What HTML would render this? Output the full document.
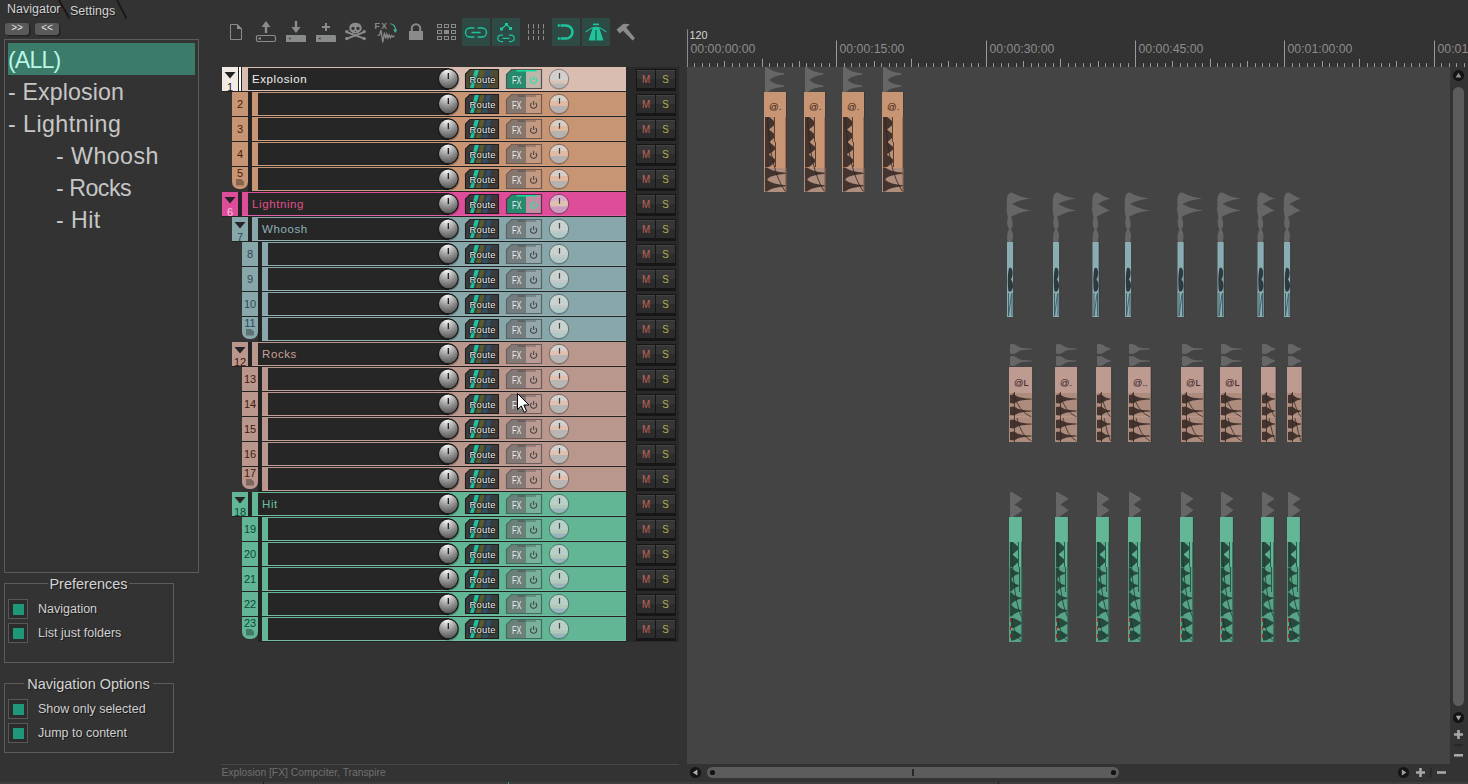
<!DOCTYPE html>
<html><head><meta charset="utf-8"><title>Navigator</title>
<style>
*{box-sizing:border-box;margin:0;padding:0}
html,body{width:1468px;height:784px;overflow:hidden;background:#333333}
body{position:relative;font-family:"Liberation Sans",sans-serif;color:#c8c8c8}
.a{position:absolute}
.t{position:absolute;white-space:nowrap;line-height:1}
.sh{text-shadow:1px 1px 0 #1c1c1c}
.li{position:absolute;left:8px;font-size:23.2px;letter-spacing:.45px;color:#c6c6c6;white-space:nowrap;line-height:32px;height:32px}
.grp{position:absolute;border:1px solid #5c5c5c}
.cb{position:absolute;width:20px;height:20px;border:1px solid #585858;background:#2c2c2c}
.cb i{position:absolute;left:4px;top:4px;width:11px;height:11px;background:#1e9878}
.lb{position:absolute;font-size:12.5px;color:#d0d0d0;white-space:nowrap;line-height:1;text-shadow:1px 1px 0 #1a1a1a}
.nb{position:absolute;width:16px;height:24px;font-size:11px;text-align:center;line-height:1}
.nb span{position:absolute;left:0;width:16px;text-align:center}
.row{position:absolute;height:24px}
.nm{position:absolute;top:1px;height:22px;background:#262626}
.nt{position:absolute;font-size:11.5px;letter-spacing:.6px;line-height:1;white-space:nowrap}
.ms{position:absolute;width:20px;height:20px;border:1px solid #161616;background:linear-gradient(#444 0,#444 1px,#363636 1px,#363636 50%,#2c2c2c 50%,#2c2c2c 100%);font-size:9.8px;text-align:center;line-height:18px;box-shadow:0 2px 0 #161616}
.ms i{display:block;font-style:normal;transform:scaleY(1.2)}
.rt{position:absolute;font-size:9.4px;letter-spacing:.25px;color:#f8f8f8;line-height:1;white-space:nowrap;text-shadow:0 0 1.5px #000,0 0 1.5px #000,0 0 2px #111}
.fx{position:absolute;font-size:9.7px;color:#ececec;line-height:1;white-space:nowrap;transform:scale(.76,1.03);transform-origin:0 0}
.rl{position:absolute;font-size:12.3px;color:#8c8c8c;line-height:1;white-space:nowrap}
</style></head><body>

<div class="t sh" style="left:7px;top:3px;font-size:12.5px;color:#d2d2d2">Navigator</div>
<div class="t sh" style="left:70px;top:5px;font-size:12.5px;color:#d2d2d2">Settings</div>
<svg class="a" style="left:0;top:0" width="140" height="22"><path d="M59 0 L69.5 18.5 M117 0 L126.5 18.5" stroke="#181818" stroke-width="1.8" fill="none"/></svg>
<div class="a" style="left:5px;top:23px;width:24px;height:11.5px;background:#5a5a5a;border-radius:3px;box-shadow:1.5px 1.5px 0 #222;font-size:10px;line-height:9px;text-align:center;color:#e4e4e4;letter-spacing:0">&gt;&gt;</div>
<div class="a" style="left:35px;top:23px;width:24px;height:11.5px;background:#5a5a5a;border-radius:3px;box-shadow:1.5px 1.5px 0 #222;font-size:10px;line-height:9px;text-align:center;color:#e4e4e4;letter-spacing:0">&lt;&lt;</div>
<div class="a" style="left:4px;top:39px;width:195px;height:534px;border:1px solid #5c5c5c"></div>
<div class="a" style="left:8px;top:43px;width:187px;height:32px;background:#3a7b69"></div>
<div class="li" style="left:8px;top:44px;color:#b8f6e6;letter-spacing:-.9px">(ALL)</div>
<div class="li" style="left:8px;top:76px;color:#c6c6c6;letter-spacing:.12px">- Explosion</div>
<div class="li" style="left:8px;top:108px">- Lightning</div>
<div class="li" style="left:56px;top:140px">- Whoosh</div>
<div class="li" style="left:56px;top:172px;color:#c6c6c6;letter-spacing:-.5px">- Rocks</div>
<div class="li" style="left:56px;top:204px">- Hit</div>
<div class="grp" style="left:4px;top:583px;width:170px;height:80px"></div>
<div class="t sh" style="left:48px;top:575px;width:81px;text-align:center;background:#333333;font-size:14.5px;color:#d4d4d4;height:18px;line-height:18px">Preferences</div>
<div class="cb" style="left:8px;top:599px"><i></i></div>
<div class="lb" style="left:38px;top:603px">Navigation</div>
<div class="cb" style="left:8px;top:623px"><i></i></div>
<div class="lb" style="left:38px;top:627px">List just folders</div>
<div class="grp" style="left:4px;top:683px;width:170px;height:70px"></div>
<div class="t sh" style="left:24px;top:675px;width:129px;text-align:center;background:#333333;font-size:14.5px;color:#d4d4d4;height:18px;line-height:18px">Navigation Options</div>
<div class="cb" style="left:8px;top:699px"><i></i></div>
<div class="lb" style="left:38px;top:703px">Show only selected</div>
<div class="cb" style="left:8px;top:723px"><i></i></div>
<div class="lb" style="left:38px;top:727px">Jump to content</div>
<svg class="a" style="left:220px;top:14px" width="430" height="40" viewBox="220 14 430 40">
<rect x="462" y="18" width="28" height="28" fill="#2d4a44"/>
<rect x="492" y="18" width="28" height="28" fill="#2d4a44"/>
<rect x="552" y="18" width="28" height="28" fill="#2d4a44"/>
<rect x="582" y="18" width="28" height="28" fill="#2d4a44"/>
<path d="M230.5 24.5 H237.5 L241.5 28.5 V39.5 H230.5 Z" fill="none" stroke="#8a8c8c" stroke-width="1"/><path d="M237 24 L242 29 H237 Z" fill="#8a8c8c"/>
<path d="M266 21 L270.5 27 H267.2 V33 H264.8 V27 H261.5 Z" fill="#8a8c8c"/>
<rect x="256.5" y="35.5" width="19" height="6" rx="1.5" fill="none" stroke="#8a8c8c" stroke-width="1.2"/><rect x="258.5" y="37.5" width="2.5" height="2" fill="#8a8c8c"/>
<path d="M296 33 L291.5 27 H294.8 V21 H297.2 V27 H300.5 Z" fill="#8a8c8c"/>
<path d="M286 35 H305 L306 36 V42 H286 Z" fill="#8a8c8c"/><path d="M288.5 38.5 L290.5 37.3 V39.7 Z" fill="#333"/>
<path d="M322 26 H325 V23 H327 V26 H330 V28 H327 V31 H325 V28 H322 Z" fill="#8a8c8c"/>
<path d="M316 35 H335 L336 36 V42 H316 Z" fill="#8a8c8c"/><path d="M318.5 38.5 L320.5 37.3 V39.7 Z" fill="#333"/>
<g fill="#8a8c8c"><path d="M355.5 22.8 C351 22.8 349.3 25.6 349.3 28.2 C349.3 30.3 350.6 31.5 352.2 32.3 V35 H358.8 V32.3 C360.4 31.5 361.7 30.3 361.7 28.2 C361.7 25.6 360 22.8 355.5 22.8 Z"/><path d="M346.5 31 L364.5 37.8 L363.8 39.6 L345.8 32.8 Z"/><path d="M364.5 31 L346.5 37.8 L347.2 39.6 L365.2 32.8 Z"/><circle cx="346.8" cy="31.6" r="1.7"/><circle cx="364.2" cy="31.6" r="1.7"/><circle cx="346.8" cy="38.6" r="1.7"/><circle cx="364.2" cy="38.6" r="1.7"/></g>
<circle cx="353" cy="28.4" r="1.6" fill="#333"/><circle cx="358" cy="28.4" r="1.6" fill="#333"/><path d="M354.8 32 L355.5 30.4 L356.2 32 Z" fill="#333"/><path d="M353 33.6 H358" stroke="#333" stroke-width=".7"/>
<text x="374.5" y="28.8" font-family="Liberation Sans, sans-serif" font-size="8.6" font-weight="bold" fill="#8a8c8c" letter-spacing="1.6">FX</text>
<path d="M377.5 35.5 L379.6 35 L381 30 L382.8 42.5 L384.4 32.5 L385.6 38.5 L386.8 34 L388 38 L389.2 35 L390.4 37.8 L391.6 35.5 L393 37 L394.5 35.8" fill="none" stroke="#8a8c8c" stroke-width="1.25"/>
<path d="M390.5 23.8 C394 24 395.5 27 395.3 30.5" fill="none" stroke="#3fb89a" stroke-width="1.1"/><path d="M393.2 29.5 L397.4 29.5 L395.3 33 Z" fill="#3fb89a"/>
<path d="M409 31 H423 V40 H409 Z" fill="#8a8c8c"/><path d="M411.8 31 V28.5 A4.2 4.2 0 0 1 420.2 28.5 V31" fill="none" stroke="#8a8c8c" stroke-width="2"/>
<rect x="437.5" y="24.5" width="4" height="3" fill="none" stroke="#8a8c8c" stroke-width="1"/>
<rect x="444.5" y="24.5" width="4" height="3" fill="none" stroke="#8a8c8c" stroke-width="1"/>
<rect x="451.5" y="24.5" width="4" height="3" fill="none" stroke="#8a8c8c" stroke-width="1"/>
<rect x="437.5" y="30.5" width="4" height="3" fill="none" stroke="#8a8c8c" stroke-width="1"/>
<rect x="444.0" y="30.0" width="5" height="4" fill="#8a8c8c"/>
<rect x="451.5" y="30.5" width="4" height="3" fill="none" stroke="#8a8c8c" stroke-width="1"/>
<rect x="437.5" y="36.5" width="4" height="3" fill="none" stroke="#8a8c8c" stroke-width="1"/>
<rect x="444.5" y="36.5" width="4" height="3" fill="none" stroke="#8a8c8c" stroke-width="1"/>
<rect x="451.5" y="36.5" width="4" height="3" fill="none" stroke="#8a8c8c" stroke-width="1"/>
<g fill="none" stroke="#1fc49c" stroke-width="1.3"><path d="M474.3 28 H470 A4.5 4.5 0 0 0 470 37 H474.3 M477.7 28 H482 A4.5 4.5 0 0 1 482 37 H477.7 M471.5 32.5 H480.5"/></g>
<g fill="none" stroke="#1fc49c" stroke-width="1.2"><path d="M503 35.2 H501 A3.2 3.2 0 0 0 501 41.6 H503 M509 35.2 H511 A3.2 3.2 0 0 1 511 41.6 H509 M502.5 38.4 H509.5"/><path d="M501.5 29 L506.5 24.5 L510.5 28.5"/></g>
<rect x="500" y="27.5" width="3" height="3" fill="#1fc49c"/><rect x="505" y="23" width="3" height="3" fill="#1fc49c"/><rect x="509" y="27" width="3" height="3" fill="#1fc49c"/>
<path d="M528.5 24 V28.5 M528.5 30 V34 M528.5 36 V40" stroke="#8a8c8c" stroke-width="1"/>
<path d="M533.5 24 V28.5 M533.5 30 V34 M533.5 36 V40" stroke="#8a8c8c" stroke-width="1"/>
<path d="M538.5 24 V28.5 M538.5 30 V34 M538.5 36 V40" stroke="#8a8c8c" stroke-width="1"/>
<path d="M543.5 24 V28.5 M543.5 30 V34 M543.5 36 V40" stroke="#8a8c8c" stroke-width="1"/>
<path d="M560.5 25.5 H566 A6.5 6.5 0 0 1 566 38.5 H560.5" fill="none" stroke="#1fc49c" stroke-width="2.6"/><rect x="557.8" y="24.2" width="2" height="2.6" fill="#1fc49c"/><rect x="557.8" y="37.2" width="2" height="2.6" fill="#1fc49c"/>
<path d="M593 27 H599 L603.5 40.5 H588.5 Z" fill="#1fc49c"/><path d="M596 30 V40.5" stroke="#2d4a44" stroke-width="1.2"/><path d="M593.3 23.5 H598.7 L599.2 25.3 H592.8 Z" fill="#1fc49c"/><path d="M586 32 Q596 22.5 606 32" fill="none" stroke="#1fc49c" stroke-width="1.1"/>
<path d="M616.5 29.5 L623.5 23.8 L630 24.2 L626.2 27.6 L635 38.2 L632.6 40.6 L623 30.8 L619.6 33.6 Z" fill="#8a8c8c"/>
</svg>
<div class="a" style="left:626px;top:67px;width:53px;height:575px;background:#292929"></div>
<div class="a" style="left:222px;top:67px;width:404px;height:25px;background:#232323"></div>
<div class="nb" style="left:222px;top:67px;background:#f3e9e5;"><span style="top:15px;color:#222">1</span></div>
<div class="a" style="left:239px;top:67px;width:2px;height:24px;background:#fff"></div>
<div class="row" style="left:242px;top:67px;width:384px;background:#d9bdb0;box-shadow:inset 0 -1px 0 #ddc4b8"><div class="nm" style="left:6px;width:201px"></div></div>
<div class="nt" style="left:252px;top:74px;color:#f0f0f0">Explosion</div>
<div class="ms" style="left:636px;top:69px;color:#c06558"><i>M</i></div><div class="ms" style="left:655px;width:21px;top:69px;color:#b4b050"><i>S</i></div>
<div class="a" style="left:232px;top:92px;width:394px;height:25px;background:#232323"></div>
<div class="nb" style="left:232px;top:92px;background:#c79474;"><span style="top:7px;color:#4a1e08">2</span></div>
<div class="row" style="left:252px;top:92px;width:374px;background:#c79474;box-shadow:inset 0 -1px 0 #cd9f82"><div class="nm" style="left:6px;width:191px"></div></div>
<div class="ms" style="left:636px;top:94px;color:#c06558"><i>M</i></div><div class="ms" style="left:655px;width:21px;top:94px;color:#b4b050"><i>S</i></div>
<div class="a" style="left:232px;top:117px;width:394px;height:25px;background:#232323"></div>
<div class="nb" style="left:232px;top:117px;background:#c79474;"><span style="top:7px;color:#4a1e08">3</span></div>
<div class="row" style="left:252px;top:117px;width:374px;background:#c79474;box-shadow:inset 0 -1px 0 #cd9f82"><div class="nm" style="left:6px;width:191px"></div></div>
<div class="ms" style="left:636px;top:119px;color:#c06558"><i>M</i></div><div class="ms" style="left:655px;width:21px;top:119px;color:#b4b050"><i>S</i></div>
<div class="a" style="left:232px;top:142px;width:394px;height:25px;background:#232323"></div>
<div class="nb" style="left:232px;top:142px;background:#c79474;"><span style="top:7px;color:#4a1e08">4</span></div>
<div class="row" style="left:252px;top:142px;width:374px;background:#c79474;box-shadow:inset 0 -1px 0 #cd9f82"><div class="nm" style="left:6px;width:191px"></div></div>
<div class="ms" style="left:636px;top:144px;color:#c06558"><i>M</i></div><div class="ms" style="left:655px;width:21px;top:144px;color:#b4b050"><i>S</i></div>
<div class="a" style="left:248px;top:167px;width:378px;height:25px;background:#232323"></div>
<div class="nb" style="left:232px;top:167px;background:#c79474;border-radius:0 0 7px 7px;height:22px;"><span style="top:1px;color:#4a1e08">5</span></div>
<div class="row" style="left:252px;top:167px;width:374px;background:#c79474;box-shadow:inset 0 -1px 0 #cd9f82"><div class="nm" style="left:6px;width:191px"></div></div>
<div class="ms" style="left:636px;top:169px;color:#c06558"><i>M</i></div><div class="ms" style="left:655px;width:21px;top:169px;color:#b4b050"><i>S</i></div>
<div class="a" style="left:222px;top:192px;width:404px;height:25px;background:#232323"></div>
<div class="nb" style="left:222px;top:192px;background:#de4d9a;"><span style="top:15px;color:#f8c8e4">6</span></div>
<div class="row" style="left:242px;top:192px;width:384px;background:#de4d9a;box-shadow:inset 0 -1px 0 #e15fa4"><div class="nm" style="left:6px;width:201px"></div></div>
<div class="nt" style="left:252px;top:199px;color:#e0508c">Lightning</div>
<div class="ms" style="left:636px;top:194px;color:#c06558"><i>M</i></div><div class="ms" style="left:655px;width:21px;top:194px;color:#b4b050"><i>S</i></div>
<div class="a" style="left:232px;top:217px;width:394px;height:25px;background:#232323"></div>
<div class="nb" style="left:232px;top:217px;background:#88a7ab;"><span style="top:15px;color:#2a4a58">7</span></div>
<div class="row" style="left:252px;top:217px;width:374px;background:#88a7ab;box-shadow:inset 0 -1px 0 #94b0b3"><div class="nm" style="left:6px;width:191px"></div></div>
<div class="nt" style="left:262px;top:224px;color:#8fb2ba">Whoosh</div>
<div class="ms" style="left:636px;top:219px;color:#c06558"><i>M</i></div><div class="ms" style="left:655px;width:21px;top:219px;color:#b4b050"><i>S</i></div>
<div class="a" style="left:242px;top:242px;width:384px;height:25px;background:#232323"></div>
<div class="nb" style="left:242px;top:242px;background:#88a7ab;"><span style="top:7px;color:#2a4a58">8</span></div>
<div class="row" style="left:262px;top:242px;width:364px;background:#88a7ab;box-shadow:inset 0 -1px 0 #94b0b3"><div class="nm" style="left:6px;width:181px"></div></div>
<div class="ms" style="left:636px;top:244px;color:#c06558"><i>M</i></div><div class="ms" style="left:655px;width:21px;top:244px;color:#b4b050"><i>S</i></div>
<div class="a" style="left:242px;top:267px;width:384px;height:25px;background:#232323"></div>
<div class="nb" style="left:242px;top:267px;background:#88a7ab;"><span style="top:7px;color:#2a4a58">9</span></div>
<div class="row" style="left:262px;top:267px;width:364px;background:#88a7ab;box-shadow:inset 0 -1px 0 #94b0b3"><div class="nm" style="left:6px;width:181px"></div></div>
<div class="ms" style="left:636px;top:269px;color:#c06558"><i>M</i></div><div class="ms" style="left:655px;width:21px;top:269px;color:#b4b050"><i>S</i></div>
<div class="a" style="left:242px;top:292px;width:384px;height:25px;background:#232323"></div>
<div class="nb" style="left:242px;top:292px;background:#88a7ab;"><span style="top:7px;color:#2a4a58">10</span></div>
<div class="row" style="left:262px;top:292px;width:364px;background:#88a7ab;box-shadow:inset 0 -1px 0 #94b0b3"><div class="nm" style="left:6px;width:181px"></div></div>
<div class="ms" style="left:636px;top:294px;color:#c06558"><i>M</i></div><div class="ms" style="left:655px;width:21px;top:294px;color:#b4b050"><i>S</i></div>
<div class="a" style="left:258px;top:317px;width:368px;height:25px;background:#232323"></div>
<div class="nb" style="left:242px;top:317px;background:#88a7ab;border-radius:0 0 7px 7px;height:22px;"><span style="top:1px;color:#2a4a58">11</span></div>
<div class="row" style="left:262px;top:317px;width:364px;background:#88a7ab;box-shadow:inset 0 -1px 0 #94b0b3"><div class="nm" style="left:6px;width:181px"></div></div>
<div class="ms" style="left:636px;top:319px;color:#c06558"><i>M</i></div><div class="ms" style="left:655px;width:21px;top:319px;color:#b4b050"><i>S</i></div>
<div class="a" style="left:232px;top:342px;width:394px;height:25px;background:#232323"></div>
<div class="nb" style="left:232px;top:342px;background:#ba978c;"><span style="top:15px;color:#45180e">12</span></div>
<div class="row" style="left:252px;top:342px;width:374px;background:#ba978c;box-shadow:inset 0 -1px 0 #c1a198"><div class="nm" style="left:6px;width:191px"></div></div>
<div class="nt" style="left:262px;top:349px;color:#c8a096">Rocks</div>
<div class="ms" style="left:636px;top:344px;color:#c06558"><i>M</i></div><div class="ms" style="left:655px;width:21px;top:344px;color:#b4b050"><i>S</i></div>
<div class="a" style="left:242px;top:367px;width:384px;height:25px;background:#232323"></div>
<div class="nb" style="left:242px;top:367px;background:#ba978c;"><span style="top:7px;color:#45180e">13</span></div>
<div class="row" style="left:262px;top:367px;width:364px;background:#ba978c;box-shadow:inset 0 -1px 0 #c1a198"><div class="nm" style="left:6px;width:181px"></div></div>
<div class="ms" style="left:636px;top:369px;color:#c06558"><i>M</i></div><div class="ms" style="left:655px;width:21px;top:369px;color:#b4b050"><i>S</i></div>
<div class="a" style="left:242px;top:392px;width:384px;height:25px;background:#232323"></div>
<div class="nb" style="left:242px;top:392px;background:#ba978c;"><span style="top:7px;color:#45180e">14</span></div>
<div class="row" style="left:262px;top:392px;width:364px;background:#ba978c;box-shadow:inset 0 -1px 0 #c1a198"><div class="nm" style="left:6px;width:181px"></div></div>
<div class="ms" style="left:636px;top:394px;color:#c06558"><i>M</i></div><div class="ms" style="left:655px;width:21px;top:394px;color:#b4b050"><i>S</i></div>
<div class="a" style="left:242px;top:417px;width:384px;height:25px;background:#232323"></div>
<div class="nb" style="left:242px;top:417px;background:#ba978c;"><span style="top:7px;color:#45180e">15</span></div>
<div class="row" style="left:262px;top:417px;width:364px;background:#ba978c;box-shadow:inset 0 -1px 0 #c1a198"><div class="nm" style="left:6px;width:181px"></div></div>
<div class="ms" style="left:636px;top:419px;color:#c06558"><i>M</i></div><div class="ms" style="left:655px;width:21px;top:419px;color:#b4b050"><i>S</i></div>
<div class="a" style="left:242px;top:442px;width:384px;height:25px;background:#232323"></div>
<div class="nb" style="left:242px;top:442px;background:#ba978c;"><span style="top:7px;color:#45180e">16</span></div>
<div class="row" style="left:262px;top:442px;width:364px;background:#ba978c;box-shadow:inset 0 -1px 0 #c1a198"><div class="nm" style="left:6px;width:181px"></div></div>
<div class="ms" style="left:636px;top:444px;color:#c06558"><i>M</i></div><div class="ms" style="left:655px;width:21px;top:444px;color:#b4b050"><i>S</i></div>
<div class="a" style="left:258px;top:467px;width:368px;height:25px;background:#232323"></div>
<div class="nb" style="left:242px;top:467px;background:#ba978c;border-radius:0 0 7px 7px;height:22px;"><span style="top:1px;color:#45180e">17</span></div>
<div class="row" style="left:262px;top:467px;width:364px;background:#ba978c;box-shadow:inset 0 -1px 0 #c1a198"><div class="nm" style="left:6px;width:181px"></div></div>
<div class="ms" style="left:636px;top:469px;color:#c06558"><i>M</i></div><div class="ms" style="left:655px;width:21px;top:469px;color:#b4b050"><i>S</i></div>
<div class="a" style="left:232px;top:492px;width:394px;height:25px;background:#232323"></div>
<div class="nb" style="left:232px;top:492px;background:#62b696;"><span style="top:15px;color:#0a4a38">18</span></div>
<div class="row" style="left:252px;top:492px;width:374px;background:#62b696;box-shadow:inset 0 -1px 0 #72bda0"><div class="nm" style="left:6px;width:191px"></div></div>
<div class="nt" style="left:262px;top:499px;color:#6cc0a0">Hit</div>
<div class="ms" style="left:636px;top:494px;color:#c06558"><i>M</i></div><div class="ms" style="left:655px;width:21px;top:494px;color:#b4b050"><i>S</i></div>
<div class="a" style="left:242px;top:517px;width:384px;height:25px;background:#232323"></div>
<div class="nb" style="left:242px;top:517px;background:#62b696;"><span style="top:7px;color:#0a4a38">19</span></div>
<div class="row" style="left:262px;top:517px;width:364px;background:#62b696;box-shadow:inset 0 -1px 0 #72bda0"><div class="nm" style="left:6px;width:181px"></div></div>
<div class="ms" style="left:636px;top:519px;color:#c06558"><i>M</i></div><div class="ms" style="left:655px;width:21px;top:519px;color:#b4b050"><i>S</i></div>
<div class="a" style="left:242px;top:542px;width:384px;height:25px;background:#232323"></div>
<div class="nb" style="left:242px;top:542px;background:#62b696;"><span style="top:7px;color:#0a4a38">20</span></div>
<div class="row" style="left:262px;top:542px;width:364px;background:#62b696;box-shadow:inset 0 -1px 0 #72bda0"><div class="nm" style="left:6px;width:181px"></div></div>
<div class="ms" style="left:636px;top:544px;color:#c06558"><i>M</i></div><div class="ms" style="left:655px;width:21px;top:544px;color:#b4b050"><i>S</i></div>
<div class="a" style="left:242px;top:567px;width:384px;height:25px;background:#232323"></div>
<div class="nb" style="left:242px;top:567px;background:#62b696;"><span style="top:7px;color:#0a4a38">21</span></div>
<div class="row" style="left:262px;top:567px;width:364px;background:#62b696;box-shadow:inset 0 -1px 0 #72bda0"><div class="nm" style="left:6px;width:181px"></div></div>
<div class="ms" style="left:636px;top:569px;color:#c06558"><i>M</i></div><div class="ms" style="left:655px;width:21px;top:569px;color:#b4b050"><i>S</i></div>
<div class="a" style="left:242px;top:592px;width:384px;height:25px;background:#232323"></div>
<div class="nb" style="left:242px;top:592px;background:#62b696;"><span style="top:7px;color:#0a4a38">22</span></div>
<div class="row" style="left:262px;top:592px;width:364px;background:#62b696;box-shadow:inset 0 -1px 0 #72bda0"><div class="nm" style="left:6px;width:181px"></div></div>
<div class="ms" style="left:636px;top:594px;color:#c06558"><i>M</i></div><div class="ms" style="left:655px;width:21px;top:594px;color:#b4b050"><i>S</i></div>
<div class="a" style="left:258px;top:617px;width:368px;height:25px;background:#232323"></div>
<div class="nb" style="left:242px;top:617px;background:#62b696;border-radius:0 0 7px 7px;height:22px;"><span style="top:1px;color:#0a4a38">23</span></div>
<div class="row" style="left:262px;top:617px;width:364px;background:#62b696;box-shadow:inset 0 -1px 0 #72bda0"><div class="nm" style="left:6px;width:181px"></div></div>
<div class="ms" style="left:636px;top:619px;color:#c06558"><i>M</i></div><div class="ms" style="left:655px;width:21px;top:619px;color:#b4b050"><i>S</i></div>
<svg class="a" style="left:0;top:0" width="700" height="660" viewBox="0 0 700 660"><defs><radialGradient id="kg" cx=".42" cy=".1" r=".95"><stop offset="0" stop-color="#f6f6f6"/><stop offset=".28" stop-color="#c2c2c2"/><stop offset=".6" stop-color="#8a8a8a"/><stop offset="1" stop-color="#4c4c4c"/></radialGradient><radialGradient id="ks"><stop offset=".75" stop-color="#000" stop-opacity=".55"/><stop offset="1" stop-color="#000" stop-opacity="0"/></radialGradient></defs>
<path d="M224.5 72 H235.5 L230 78.5 Z" fill="#242424"/>
<circle cx="448.6" cy="79.9" r="11.4" fill="url(#ks)"/><circle cx="448.3" cy="78.8" r="9.9" fill="url(#kg)" stroke="#191919" stroke-width="1.1"/><path d="M448.3 73 V79" stroke="#111" stroke-width="1.2"/>
<g transform="translate(0,69)"><path d="M470 .5 H498.5 V19.5 H465.5 V5 Z" fill="#504c34" stroke="#1e1e1e" stroke-width="1.1"/><path d="M470 19 L474.8 1 H479 L473.6 19 Z" fill="#1fc0a0"/><path d="M475.8 19 L480.4 1 H484.6 L480.6 19 Z" fill="#5a5a30"/><path d="M482 19 L486.8 1 H491 L487.2 19 Z" fill="#2f5068"/></g>
<g transform="translate(0,69)"><path d="M511.5 .5 H541.5 V19.5 H506.5 V5.5 Z" fill="#beb5ab"/><path d="M511.5 .5 H526 V19.5 H506.5 V5.5 Z" fill="#258a6e"/><path d="M516.5 1.6 H536.5" stroke="#14e09a" stroke-width="1.8"/><path d="M511.5 .5 H541.5 V19.5 H506.5 V5.5 Z" fill="none" stroke="#584f51" stroke-width="1.2"/><path d="M531.5 9 A3.1 3.1 0 1 0 535.7 9 M533.6 7 V11" fill="none" stroke="#2fe0a8" stroke-width="1.15"/></g>
<g transform="translate(559,79)"><circle cx="0" cy=".8" r="10.2" fill="#000" opacity=".13"/><circle r="9.7" fill="#d2d0ce"/><clipPath id="c1"><circle r="9.5"/></clipPath><g clip-path="url(#c1)"><rect x="-10" y="1.5" width="20" height="3.0" fill="#dec2b4"/><rect x="-10" y="4.5" width="20" height="5.5" fill="#b8b8b8"/></g><circle r="9.7" fill="none" stroke="#8d7e76" stroke-width="1"/><path d="M.5 -6 V-.3" stroke="#444" stroke-width="1.2"/></g>
<circle cx="448.6" cy="104.9" r="11.4" fill="url(#ks)"/><circle cx="448.3" cy="103.8" r="9.9" fill="url(#kg)" stroke="#191919" stroke-width="1.1"/><path d="M448.3 98 V104" stroke="#111" stroke-width="1.2"/>
<g transform="translate(0,94)"><path d="M470 .5 H498.5 V19.5 H465.5 V5 Z" fill="#3f3a37" stroke="#1e1e1e" stroke-width="1.1"/><path d="M470 19 L474.8 1 H479 L473.6 19 Z" fill="#1fc0a0"/><path d="M475.8 19 L480.4 1 H484.6 L480.6 19 Z" fill="#5a5a30"/><path d="M482 19 L486.8 1 H491 L487.2 19 Z" fill="#2f5068"/></g>
<g transform="translate(0,94)"><path d="M511.5 .5 H541.5 V19.5 H506.5 V5.5 Z" fill="#c39981"/><path d="M511.5 .5 H526 V19.5 H506.5 V5.5 Z" fill="#85776e"/><path d="M517.5 2 H525.5" stroke="#645952" stroke-width="1.5"/><path d="M525.5 2 H536" stroke="#927361" stroke-width="1.5"/><path d="M511.5 .5 H541.5 V19.5 H506.5 V5.5 Z" fill="none" stroke="#745a4e" stroke-width="1.2"/><path d="M531.5 9 A3.1 3.1 0 1 0 535.7 9 M533.6 7 V11" fill="none" stroke="#514944" stroke-width="1.15"/></g>
<g transform="translate(559,104)"><circle cx="0" cy=".8" r="10.2" fill="#000" opacity=".13"/><circle r="9.7" fill="#d8cec8"/><clipPath id="c2"><circle r="9.5"/></clipPath><g clip-path="url(#c2)"><rect x="-10" y="-3" width="20" height="5" fill="#e2baa2"/><rect x="-10" y="2" width="20" height="8" fill="#b6b2b0"/></g><circle r="9.7" fill="none" stroke="#836755" stroke-width="1"/><path d="M.5 -6 V-.3" stroke="#444" stroke-width="1.2"/></g>
<circle cx="448.6" cy="129.9" r="11.4" fill="url(#ks)"/><circle cx="448.3" cy="128.8" r="9.9" fill="url(#kg)" stroke="#191919" stroke-width="1.1"/><path d="M448.3 123 V129" stroke="#111" stroke-width="1.2"/>
<g transform="translate(0,119)"><path d="M470 .5 H498.5 V19.5 H465.5 V5 Z" fill="#3f3a37" stroke="#1e1e1e" stroke-width="1.1"/><path d="M470 19 L474.8 1 H479 L473.6 19 Z" fill="#1fc0a0"/><path d="M475.8 19 L480.4 1 H484.6 L480.6 19 Z" fill="#5a5a30"/><path d="M482 19 L486.8 1 H491 L487.2 19 Z" fill="#2f5068"/></g>
<g transform="translate(0,119)"><path d="M511.5 .5 H541.5 V19.5 H506.5 V5.5 Z" fill="#c39981"/><path d="M511.5 .5 H526 V19.5 H506.5 V5.5 Z" fill="#85776e"/><path d="M517.5 2 H525.5" stroke="#645952" stroke-width="1.5"/><path d="M525.5 2 H536" stroke="#927361" stroke-width="1.5"/><path d="M511.5 .5 H541.5 V19.5 H506.5 V5.5 Z" fill="none" stroke="#745a4e" stroke-width="1.2"/><path d="M531.5 9 A3.1 3.1 0 1 0 535.7 9 M533.6 7 V11" fill="none" stroke="#514944" stroke-width="1.15"/></g>
<g transform="translate(559,129)"><circle cx="0" cy=".8" r="10.2" fill="#000" opacity=".13"/><circle r="9.7" fill="#d8cec8"/><clipPath id="c3"><circle r="9.5"/></clipPath><g clip-path="url(#c3)"><rect x="-10" y="-3" width="20" height="5" fill="#e2baa2"/><rect x="-10" y="2" width="20" height="8" fill="#b6b2b0"/></g><circle r="9.7" fill="none" stroke="#836755" stroke-width="1"/><path d="M.5 -6 V-.3" stroke="#444" stroke-width="1.2"/></g>
<circle cx="448.6" cy="154.9" r="11.4" fill="url(#ks)"/><circle cx="448.3" cy="153.8" r="9.9" fill="url(#kg)" stroke="#191919" stroke-width="1.1"/><path d="M448.3 148 V154" stroke="#111" stroke-width="1.2"/>
<g transform="translate(0,144)"><path d="M470 .5 H498.5 V19.5 H465.5 V5 Z" fill="#3f3a37" stroke="#1e1e1e" stroke-width="1.1"/><path d="M470 19 L474.8 1 H479 L473.6 19 Z" fill="#1fc0a0"/><path d="M475.8 19 L480.4 1 H484.6 L480.6 19 Z" fill="#5a5a30"/><path d="M482 19 L486.8 1 H491 L487.2 19 Z" fill="#2f5068"/></g>
<g transform="translate(0,144)"><path d="M511.5 .5 H541.5 V19.5 H506.5 V5.5 Z" fill="#c39981"/><path d="M511.5 .5 H526 V19.5 H506.5 V5.5 Z" fill="#85776e"/><path d="M517.5 2 H525.5" stroke="#645952" stroke-width="1.5"/><path d="M525.5 2 H536" stroke="#927361" stroke-width="1.5"/><path d="M511.5 .5 H541.5 V19.5 H506.5 V5.5 Z" fill="none" stroke="#745a4e" stroke-width="1.2"/><path d="M531.5 9 A3.1 3.1 0 1 0 535.7 9 M533.6 7 V11" fill="none" stroke="#514944" stroke-width="1.15"/></g>
<g transform="translate(559,154)"><circle cx="0" cy=".8" r="10.2" fill="#000" opacity=".13"/><circle r="9.7" fill="#d8cec8"/><clipPath id="c4"><circle r="9.5"/></clipPath><g clip-path="url(#c4)"><rect x="-10" y="-3" width="20" height="5" fill="#e2baa2"/><rect x="-10" y="2" width="20" height="8" fill="#b6b2b0"/></g><circle r="9.7" fill="none" stroke="#836755" stroke-width="1"/><path d="M.5 -6 V-.3" stroke="#444" stroke-width="1.2"/></g>
<path d="M236 179 H241 L244 181.5 V185.5 H236 Z" fill="#87654f"/>
<circle cx="448.6" cy="179.9" r="11.4" fill="url(#ks)"/><circle cx="448.3" cy="178.8" r="9.9" fill="url(#kg)" stroke="#191919" stroke-width="1.1"/><path d="M448.3 173 V179" stroke="#111" stroke-width="1.2"/>
<g transform="translate(0,169)"><path d="M470 .5 H498.5 V19.5 H465.5 V5 Z" fill="#3f3a37" stroke="#1e1e1e" stroke-width="1.1"/><path d="M470 19 L474.8 1 H479 L473.6 19 Z" fill="#1fc0a0"/><path d="M475.8 19 L480.4 1 H484.6 L480.6 19 Z" fill="#5a5a30"/><path d="M482 19 L486.8 1 H491 L487.2 19 Z" fill="#2f5068"/></g>
<g transform="translate(0,169)"><path d="M511.5 .5 H541.5 V19.5 H506.5 V5.5 Z" fill="#c39981"/><path d="M511.5 .5 H526 V19.5 H506.5 V5.5 Z" fill="#85776e"/><path d="M517.5 2 H525.5" stroke="#645952" stroke-width="1.5"/><path d="M525.5 2 H536" stroke="#927361" stroke-width="1.5"/><path d="M511.5 .5 H541.5 V19.5 H506.5 V5.5 Z" fill="none" stroke="#745a4e" stroke-width="1.2"/><path d="M531.5 9 A3.1 3.1 0 1 0 535.7 9 M533.6 7 V11" fill="none" stroke="#514944" stroke-width="1.15"/></g>
<g transform="translate(559,179)"><circle cx="0" cy=".8" r="10.2" fill="#000" opacity=".13"/><circle r="9.7" fill="#d8cec8"/><clipPath id="c5"><circle r="9.5"/></clipPath><g clip-path="url(#c5)"><rect x="-10" y="-3" width="20" height="5" fill="#e2baa2"/><rect x="-10" y="2" width="20" height="8" fill="#b6b2b0"/></g><circle r="9.7" fill="none" stroke="#836755" stroke-width="1"/><path d="M.5 -6 V-.3" stroke="#444" stroke-width="1.2"/></g>
<path d="M224.5 197 H235.5 L230 203.5 Z" fill="#242424"/>
<circle cx="448.6" cy="204.9" r="11.4" fill="url(#ks)"/><circle cx="448.3" cy="203.8" r="9.9" fill="url(#kg)" stroke="#191919" stroke-width="1.1"/><path d="M448.3 198 V204" stroke="#111" stroke-width="1.2"/>
<g transform="translate(0,194)"><path d="M470 .5 H498.5 V19.5 H465.5 V5 Z" fill="#41343a" stroke="#1e1e1e" stroke-width="1.1"/><path d="M470 19 L474.8 1 H479 L473.6 19 Z" fill="#1fc0a0"/><path d="M475.8 19 L480.4 1 H484.6 L480.6 19 Z" fill="#5a5a30"/><path d="M482 19 L486.8 1 H491 L487.2 19 Z" fill="#2f5068"/></g>
<g transform="translate(0,194)"><path d="M511.5 .5 H541.5 V19.5 H506.5 V5.5 Z" fill="#c08da3"/><path d="M511.5 .5 H526 V19.5 H506.5 V5.5 Z" fill="#258a6e"/><path d="M516.5 1.6 H536.5" stroke="#14e09a" stroke-width="1.8"/><path d="M511.5 .5 H541.5 V19.5 H506.5 V5.5 Z" fill="none" stroke="#592e4a" stroke-width="1.2"/><path d="M531.5 9 A3.1 3.1 0 1 0 535.7 9 M533.6 7 V11" fill="none" stroke="#2fe0a8" stroke-width="1.15"/></g>
<g transform="translate(559,204)"><circle cx="0" cy=".8" r="10.2" fill="#000" opacity=".13"/><circle r="9.7" fill="#d8b0cc"/><clipPath id="c6"><circle r="9.5"/></clipPath><g clip-path="url(#c6)"><rect x="-10" y="-3" width="20" height="5.5" fill="#e0c0b0"/><rect x="-10" y="2.5" width="20" height="7.5" fill="#cc9cc0"/></g><circle r="9.7" fill="none" stroke="#90406a" stroke-width="1"/><path d="M.5 -6 V-.3" stroke="#444" stroke-width="1.2"/></g>
<path d="M234.5 222 H245.5 L240 228.5 Z" fill="#242424"/>
<circle cx="448.6" cy="229.9" r="11.4" fill="url(#ks)"/><circle cx="448.3" cy="228.8" r="9.9" fill="url(#kg)" stroke="#191919" stroke-width="1.1"/><path d="M448.3 223 V229" stroke="#111" stroke-width="1.2"/>
<g transform="translate(0,219)"><path d="M470 .5 H498.5 V19.5 H465.5 V5 Z" fill="#3a3b3c" stroke="#1e1e1e" stroke-width="1.1"/><path d="M470 19 L474.8 1 H479 L473.6 19 Z" fill="#1fc0a0"/><path d="M475.8 19 L480.4 1 H484.6 L480.6 19 Z" fill="#5a5a30"/><path d="M482 19 L486.8 1 H491 L487.2 19 Z" fill="#2f5068"/></g>
<g transform="translate(0,219)"><path d="M511.5 .5 H541.5 V19.5 H506.5 V5.5 Z" fill="#94a7aa"/><path d="M511.5 .5 H526 V19.5 H506.5 V5.5 Z" fill="#747d7e"/><path d="M517.5 2 H525.5" stroke="#575e5e" stroke-width="1.5"/><path d="M525.5 2 H536" stroke="#6f7d80" stroke-width="1.5"/><path d="M511.5 .5 H541.5 V19.5 H506.5 V5.5 Z" fill="none" stroke="#54646a" stroke-width="1.2"/><path d="M531.5 9 A3.1 3.1 0 1 0 535.7 9 M533.6 7 V11" fill="none" stroke="#474c4d" stroke-width="1.15"/></g>
<g transform="translate(559,229)"><circle cx="0" cy=".8" r="10.2" fill="#000" opacity=".13"/><circle r="9.7" fill="#c8d2ce"/><clipPath id="c7"><circle r="9.5"/></clipPath><g clip-path="url(#c7)"><rect x="-10" y="1" width="20" height="2.5" fill="#c4c8c6"/><rect x="-10" y="3.5" width="20" height="6.5" fill="#b0c8c8"/></g><circle r="9.7" fill="none" stroke="#607174" stroke-width="1"/><path d="M.5 -6 V-.3" stroke="#444" stroke-width="1.2"/></g>
<circle cx="448.6" cy="254.9" r="11.4" fill="url(#ks)"/><circle cx="448.3" cy="253.8" r="9.9" fill="url(#kg)" stroke="#191919" stroke-width="1.1"/><path d="M448.3 248 V254" stroke="#111" stroke-width="1.2"/>
<g transform="translate(0,244)"><path d="M470 .5 H498.5 V19.5 H465.5 V5 Z" fill="#3a3b3c" stroke="#1e1e1e" stroke-width="1.1"/><path d="M470 19 L474.8 1 H479 L473.6 19 Z" fill="#1fc0a0"/><path d="M475.8 19 L480.4 1 H484.6 L480.6 19 Z" fill="#5a5a30"/><path d="M482 19 L486.8 1 H491 L487.2 19 Z" fill="#2f5068"/></g>
<g transform="translate(0,244)"><path d="M511.5 .5 H541.5 V19.5 H506.5 V5.5 Z" fill="#94a7aa"/><path d="M511.5 .5 H526 V19.5 H506.5 V5.5 Z" fill="#747d7e"/><path d="M517.5 2 H525.5" stroke="#575e5e" stroke-width="1.5"/><path d="M525.5 2 H536" stroke="#6f7d80" stroke-width="1.5"/><path d="M511.5 .5 H541.5 V19.5 H506.5 V5.5 Z" fill="none" stroke="#54646a" stroke-width="1.2"/><path d="M531.5 9 A3.1 3.1 0 1 0 535.7 9 M533.6 7 V11" fill="none" stroke="#474c4d" stroke-width="1.15"/></g>
<g transform="translate(559,254)"><circle cx="0" cy=".8" r="10.2" fill="#000" opacity=".13"/><circle r="9.7" fill="#c8d2ce"/><clipPath id="c8"><circle r="9.5"/></clipPath><g clip-path="url(#c8)"><rect x="-10" y="1" width="20" height="2.5" fill="#c4c8c6"/><rect x="-10" y="3.5" width="20" height="6.5" fill="#b0c8c8"/></g><circle r="9.7" fill="none" stroke="#607174" stroke-width="1"/><path d="M.5 -6 V-.3" stroke="#444" stroke-width="1.2"/></g>
<circle cx="448.6" cy="279.9" r="11.4" fill="url(#ks)"/><circle cx="448.3" cy="278.8" r="9.9" fill="url(#kg)" stroke="#191919" stroke-width="1.1"/><path d="M448.3 273 V279" stroke="#111" stroke-width="1.2"/>
<g transform="translate(0,269)"><path d="M470 .5 H498.5 V19.5 H465.5 V5 Z" fill="#3a3b3c" stroke="#1e1e1e" stroke-width="1.1"/><path d="M470 19 L474.8 1 H479 L473.6 19 Z" fill="#1fc0a0"/><path d="M475.8 19 L480.4 1 H484.6 L480.6 19 Z" fill="#5a5a30"/><path d="M482 19 L486.8 1 H491 L487.2 19 Z" fill="#2f5068"/></g>
<g transform="translate(0,269)"><path d="M511.5 .5 H541.5 V19.5 H506.5 V5.5 Z" fill="#94a7aa"/><path d="M511.5 .5 H526 V19.5 H506.5 V5.5 Z" fill="#747d7e"/><path d="M517.5 2 H525.5" stroke="#575e5e" stroke-width="1.5"/><path d="M525.5 2 H536" stroke="#6f7d80" stroke-width="1.5"/><path d="M511.5 .5 H541.5 V19.5 H506.5 V5.5 Z" fill="none" stroke="#54646a" stroke-width="1.2"/><path d="M531.5 9 A3.1 3.1 0 1 0 535.7 9 M533.6 7 V11" fill="none" stroke="#474c4d" stroke-width="1.15"/></g>
<g transform="translate(559,279)"><circle cx="0" cy=".8" r="10.2" fill="#000" opacity=".13"/><circle r="9.7" fill="#c8d2ce"/><clipPath id="c9"><circle r="9.5"/></clipPath><g clip-path="url(#c9)"><rect x="-10" y="1" width="20" height="2.5" fill="#c4c8c6"/><rect x="-10" y="3.5" width="20" height="6.5" fill="#b0c8c8"/></g><circle r="9.7" fill="none" stroke="#607174" stroke-width="1"/><path d="M.5 -6 V-.3" stroke="#444" stroke-width="1.2"/></g>
<circle cx="448.6" cy="304.9" r="11.4" fill="url(#ks)"/><circle cx="448.3" cy="303.8" r="9.9" fill="url(#kg)" stroke="#191919" stroke-width="1.1"/><path d="M448.3 298 V304" stroke="#111" stroke-width="1.2"/>
<g transform="translate(0,294)"><path d="M470 .5 H498.5 V19.5 H465.5 V5 Z" fill="#3a3b3c" stroke="#1e1e1e" stroke-width="1.1"/><path d="M470 19 L474.8 1 H479 L473.6 19 Z" fill="#1fc0a0"/><path d="M475.8 19 L480.4 1 H484.6 L480.6 19 Z" fill="#5a5a30"/><path d="M482 19 L486.8 1 H491 L487.2 19 Z" fill="#2f5068"/></g>
<g transform="translate(0,294)"><path d="M511.5 .5 H541.5 V19.5 H506.5 V5.5 Z" fill="#94a7aa"/><path d="M511.5 .5 H526 V19.5 H506.5 V5.5 Z" fill="#747d7e"/><path d="M517.5 2 H525.5" stroke="#575e5e" stroke-width="1.5"/><path d="M525.5 2 H536" stroke="#6f7d80" stroke-width="1.5"/><path d="M511.5 .5 H541.5 V19.5 H506.5 V5.5 Z" fill="none" stroke="#54646a" stroke-width="1.2"/><path d="M531.5 9 A3.1 3.1 0 1 0 535.7 9 M533.6 7 V11" fill="none" stroke="#474c4d" stroke-width="1.15"/></g>
<g transform="translate(559,304)"><circle cx="0" cy=".8" r="10.2" fill="#000" opacity=".13"/><circle r="9.7" fill="#c8d2ce"/><clipPath id="c10"><circle r="9.5"/></clipPath><g clip-path="url(#c10)"><rect x="-10" y="1" width="20" height="2.5" fill="#c4c8c6"/><rect x="-10" y="3.5" width="20" height="6.5" fill="#b0c8c8"/></g><circle r="9.7" fill="none" stroke="#607174" stroke-width="1"/><path d="M.5 -6 V-.3" stroke="#444" stroke-width="1.2"/></g>
<path d="M246 329 H251 L254 331.5 V335.5 H246 Z" fill="#5c7274"/>
<circle cx="448.6" cy="329.9" r="11.4" fill="url(#ks)"/><circle cx="448.3" cy="328.8" r="9.9" fill="url(#kg)" stroke="#191919" stroke-width="1.1"/><path d="M448.3 323 V329" stroke="#111" stroke-width="1.2"/>
<g transform="translate(0,319)"><path d="M470 .5 H498.5 V19.5 H465.5 V5 Z" fill="#3a3b3c" stroke="#1e1e1e" stroke-width="1.1"/><path d="M470 19 L474.8 1 H479 L473.6 19 Z" fill="#1fc0a0"/><path d="M475.8 19 L480.4 1 H484.6 L480.6 19 Z" fill="#5a5a30"/><path d="M482 19 L486.8 1 H491 L487.2 19 Z" fill="#2f5068"/></g>
<g transform="translate(0,319)"><path d="M511.5 .5 H541.5 V19.5 H506.5 V5.5 Z" fill="#94a7aa"/><path d="M511.5 .5 H526 V19.5 H506.5 V5.5 Z" fill="#747d7e"/><path d="M517.5 2 H525.5" stroke="#575e5e" stroke-width="1.5"/><path d="M525.5 2 H536" stroke="#6f7d80" stroke-width="1.5"/><path d="M511.5 .5 H541.5 V19.5 H506.5 V5.5 Z" fill="none" stroke="#54646a" stroke-width="1.2"/><path d="M531.5 9 A3.1 3.1 0 1 0 535.7 9 M533.6 7 V11" fill="none" stroke="#474c4d" stroke-width="1.15"/></g>
<g transform="translate(559,329)"><circle cx="0" cy=".8" r="10.2" fill="#000" opacity=".13"/><circle r="9.7" fill="#c8d2ce"/><clipPath id="c11"><circle r="9.5"/></clipPath><g clip-path="url(#c11)"><rect x="-10" y="1" width="20" height="2.5" fill="#c4c8c6"/><rect x="-10" y="3.5" width="20" height="6.5" fill="#b0c8c8"/></g><circle r="9.7" fill="none" stroke="#607174" stroke-width="1"/><path d="M.5 -6 V-.3" stroke="#444" stroke-width="1.2"/></g>
<path d="M234.5 347 H245.5 L240 353.5 Z" fill="#242424"/>
<circle cx="448.6" cy="354.9" r="11.4" fill="url(#ks)"/><circle cx="448.3" cy="353.8" r="9.9" fill="url(#kg)" stroke="#191919" stroke-width="1.1"/><path d="M448.3 348 V354" stroke="#111" stroke-width="1.2"/>
<g transform="translate(0,344)"><path d="M470 .5 H498.5 V19.5 H465.5 V5 Z" fill="#3e3a39" stroke="#1e1e1e" stroke-width="1.1"/><path d="M470 19 L474.8 1 H479 L473.6 19 Z" fill="#1fc0a0"/><path d="M475.8 19 L480.4 1 H484.6 L480.6 19 Z" fill="#5a5a30"/><path d="M482 19 L486.8 1 H491 L487.2 19 Z" fill="#2f5068"/></g>
<g transform="translate(0,344)"><path d="M511.5 .5 H541.5 V19.5 H506.5 V5.5 Z" fill="#ba9b93"/><path d="M511.5 .5 H526 V19.5 H506.5 V5.5 Z" fill="#827875"/><path d="M517.5 2 H525.5" stroke="#625a58" stroke-width="1.5"/><path d="M525.5 2 H536" stroke="#8c746e" stroke-width="1.5"/><path d="M511.5 .5 H541.5 V19.5 H506.5 V5.5 Z" fill="none" stroke="#6d5c5a" stroke-width="1.2"/><path d="M531.5 9 A3.1 3.1 0 1 0 535.7 9 M533.6 7 V11" fill="none" stroke="#4f4a48" stroke-width="1.15"/></g>
<g transform="translate(559,354)"><circle cx="0" cy=".8" r="10.2" fill="#000" opacity=".13"/><circle r="9.7" fill="#d4d0ce"/><clipPath id="c12"><circle r="9.5"/></clipPath><g clip-path="url(#c12)"><rect x="-10" y="-3.3" width="20" height="4.3" fill="#e2c0b0"/><rect x="-10" y="1" width="20" height="9" fill="#b8b6b4"/></g><circle r="9.7" fill="none" stroke="#7c6963" stroke-width="1"/><path d="M.5 -6 V-.3" stroke="#444" stroke-width="1.2"/></g>
<circle cx="448.6" cy="379.9" r="11.4" fill="url(#ks)"/><circle cx="448.3" cy="378.8" r="9.9" fill="url(#kg)" stroke="#191919" stroke-width="1.1"/><path d="M448.3 373 V379" stroke="#111" stroke-width="1.2"/>
<g transform="translate(0,369)"><path d="M470 .5 H498.5 V19.5 H465.5 V5 Z" fill="#3e3a39" stroke="#1e1e1e" stroke-width="1.1"/><path d="M470 19 L474.8 1 H479 L473.6 19 Z" fill="#1fc0a0"/><path d="M475.8 19 L480.4 1 H484.6 L480.6 19 Z" fill="#5a5a30"/><path d="M482 19 L486.8 1 H491 L487.2 19 Z" fill="#2f5068"/></g>
<g transform="translate(0,369)"><path d="M511.5 .5 H541.5 V19.5 H506.5 V5.5 Z" fill="#ba9b93"/><path d="M511.5 .5 H526 V19.5 H506.5 V5.5 Z" fill="#827875"/><path d="M517.5 2 H525.5" stroke="#625a58" stroke-width="1.5"/><path d="M525.5 2 H536" stroke="#8c746e" stroke-width="1.5"/><path d="M511.5 .5 H541.5 V19.5 H506.5 V5.5 Z" fill="none" stroke="#6d5c5a" stroke-width="1.2"/><path d="M531.5 9 A3.1 3.1 0 1 0 535.7 9 M533.6 7 V11" fill="none" stroke="#4f4a48" stroke-width="1.15"/></g>
<g transform="translate(559,379)"><circle cx="0" cy=".8" r="10.2" fill="#000" opacity=".13"/><circle r="9.7" fill="#d4d0ce"/><clipPath id="c13"><circle r="9.5"/></clipPath><g clip-path="url(#c13)"><rect x="-10" y="-3.3" width="20" height="4.3" fill="#e2c0b0"/><rect x="-10" y="1" width="20" height="9" fill="#b8b6b4"/></g><circle r="9.7" fill="none" stroke="#7c6963" stroke-width="1"/><path d="M.5 -6 V-.3" stroke="#444" stroke-width="1.2"/></g>
<circle cx="448.6" cy="404.9" r="11.4" fill="url(#ks)"/><circle cx="448.3" cy="403.8" r="9.9" fill="url(#kg)" stroke="#191919" stroke-width="1.1"/><path d="M448.3 398 V404" stroke="#111" stroke-width="1.2"/>
<g transform="translate(0,394)"><path d="M470 .5 H498.5 V19.5 H465.5 V5 Z" fill="#3e3a39" stroke="#1e1e1e" stroke-width="1.1"/><path d="M470 19 L474.8 1 H479 L473.6 19 Z" fill="#1fc0a0"/><path d="M475.8 19 L480.4 1 H484.6 L480.6 19 Z" fill="#5a5a30"/><path d="M482 19 L486.8 1 H491 L487.2 19 Z" fill="#2f5068"/></g>
<g transform="translate(0,394)"><path d="M511.5 .5 H541.5 V19.5 H506.5 V5.5 Z" fill="#ba9b93"/><path d="M511.5 .5 H526 V19.5 H506.5 V5.5 Z" fill="#827875"/><path d="M517.5 2 H525.5" stroke="#625a58" stroke-width="1.5"/><path d="M525.5 2 H536" stroke="#8c746e" stroke-width="1.5"/><path d="M511.5 .5 H541.5 V19.5 H506.5 V5.5 Z" fill="none" stroke="#6d5c5a" stroke-width="1.2"/><path d="M531.5 9 A3.1 3.1 0 1 0 535.7 9 M533.6 7 V11" fill="none" stroke="#4f4a48" stroke-width="1.15"/></g>
<g transform="translate(559,404)"><circle cx="0" cy=".8" r="10.2" fill="#000" opacity=".13"/><circle r="9.7" fill="#d4d0ce"/><clipPath id="c14"><circle r="9.5"/></clipPath><g clip-path="url(#c14)"><rect x="-10" y="-3.3" width="20" height="4.3" fill="#e2c0b0"/><rect x="-10" y="1" width="20" height="9" fill="#b8b6b4"/></g><circle r="9.7" fill="none" stroke="#7c6963" stroke-width="1"/><path d="M.5 -6 V-.3" stroke="#444" stroke-width="1.2"/></g>
<circle cx="448.6" cy="429.9" r="11.4" fill="url(#ks)"/><circle cx="448.3" cy="428.8" r="9.9" fill="url(#kg)" stroke="#191919" stroke-width="1.1"/><path d="M448.3 423 V429" stroke="#111" stroke-width="1.2"/>
<g transform="translate(0,419)"><path d="M470 .5 H498.5 V19.5 H465.5 V5 Z" fill="#3e3a39" stroke="#1e1e1e" stroke-width="1.1"/><path d="M470 19 L474.8 1 H479 L473.6 19 Z" fill="#1fc0a0"/><path d="M475.8 19 L480.4 1 H484.6 L480.6 19 Z" fill="#5a5a30"/><path d="M482 19 L486.8 1 H491 L487.2 19 Z" fill="#2f5068"/></g>
<g transform="translate(0,419)"><path d="M511.5 .5 H541.5 V19.5 H506.5 V5.5 Z" fill="#ba9b93"/><path d="M511.5 .5 H526 V19.5 H506.5 V5.5 Z" fill="#827875"/><path d="M517.5 2 H525.5" stroke="#625a58" stroke-width="1.5"/><path d="M525.5 2 H536" stroke="#8c746e" stroke-width="1.5"/><path d="M511.5 .5 H541.5 V19.5 H506.5 V5.5 Z" fill="none" stroke="#6d5c5a" stroke-width="1.2"/><path d="M531.5 9 A3.1 3.1 0 1 0 535.7 9 M533.6 7 V11" fill="none" stroke="#4f4a48" stroke-width="1.15"/></g>
<g transform="translate(559,429)"><circle cx="0" cy=".8" r="10.2" fill="#000" opacity=".13"/><circle r="9.7" fill="#d4d0ce"/><clipPath id="c15"><circle r="9.5"/></clipPath><g clip-path="url(#c15)"><rect x="-10" y="-3.3" width="20" height="4.3" fill="#e2c0b0"/><rect x="-10" y="1" width="20" height="9" fill="#b8b6b4"/></g><circle r="9.7" fill="none" stroke="#7c6963" stroke-width="1"/><path d="M.5 -6 V-.3" stroke="#444" stroke-width="1.2"/></g>
<circle cx="448.6" cy="454.9" r="11.4" fill="url(#ks)"/><circle cx="448.3" cy="453.8" r="9.9" fill="url(#kg)" stroke="#191919" stroke-width="1.1"/><path d="M448.3 448 V454" stroke="#111" stroke-width="1.2"/>
<g transform="translate(0,444)"><path d="M470 .5 H498.5 V19.5 H465.5 V5 Z" fill="#3e3a39" stroke="#1e1e1e" stroke-width="1.1"/><path d="M470 19 L474.8 1 H479 L473.6 19 Z" fill="#1fc0a0"/><path d="M475.8 19 L480.4 1 H484.6 L480.6 19 Z" fill="#5a5a30"/><path d="M482 19 L486.8 1 H491 L487.2 19 Z" fill="#2f5068"/></g>
<g transform="translate(0,444)"><path d="M511.5 .5 H541.5 V19.5 H506.5 V5.5 Z" fill="#ba9b93"/><path d="M511.5 .5 H526 V19.5 H506.5 V5.5 Z" fill="#827875"/><path d="M517.5 2 H525.5" stroke="#625a58" stroke-width="1.5"/><path d="M525.5 2 H536" stroke="#8c746e" stroke-width="1.5"/><path d="M511.5 .5 H541.5 V19.5 H506.5 V5.5 Z" fill="none" stroke="#6d5c5a" stroke-width="1.2"/><path d="M531.5 9 A3.1 3.1 0 1 0 535.7 9 M533.6 7 V11" fill="none" stroke="#4f4a48" stroke-width="1.15"/></g>
<g transform="translate(559,454)"><circle cx="0" cy=".8" r="10.2" fill="#000" opacity=".13"/><circle r="9.7" fill="#d4d0ce"/><clipPath id="c16"><circle r="9.5"/></clipPath><g clip-path="url(#c16)"><rect x="-10" y="-3.3" width="20" height="4.3" fill="#e2c0b0"/><rect x="-10" y="1" width="20" height="9" fill="#b8b6b4"/></g><circle r="9.7" fill="none" stroke="#7c6963" stroke-width="1"/><path d="M.5 -6 V-.3" stroke="#444" stroke-width="1.2"/></g>
<path d="M246 479 H251 L254 481.5 V485.5 H246 Z" fill="#7e675f"/>
<circle cx="448.6" cy="479.9" r="11.4" fill="url(#ks)"/><circle cx="448.3" cy="478.8" r="9.9" fill="url(#kg)" stroke="#191919" stroke-width="1.1"/><path d="M448.3 473 V479" stroke="#111" stroke-width="1.2"/>
<g transform="translate(0,469)"><path d="M470 .5 H498.5 V19.5 H465.5 V5 Z" fill="#3e3a39" stroke="#1e1e1e" stroke-width="1.1"/><path d="M470 19 L474.8 1 H479 L473.6 19 Z" fill="#1fc0a0"/><path d="M475.8 19 L480.4 1 H484.6 L480.6 19 Z" fill="#5a5a30"/><path d="M482 19 L486.8 1 H491 L487.2 19 Z" fill="#2f5068"/></g>
<g transform="translate(0,469)"><path d="M511.5 .5 H541.5 V19.5 H506.5 V5.5 Z" fill="#ba9b93"/><path d="M511.5 .5 H526 V19.5 H506.5 V5.5 Z" fill="#827875"/><path d="M517.5 2 H525.5" stroke="#625a58" stroke-width="1.5"/><path d="M525.5 2 H536" stroke="#8c746e" stroke-width="1.5"/><path d="M511.5 .5 H541.5 V19.5 H506.5 V5.5 Z" fill="none" stroke="#6d5c5a" stroke-width="1.2"/><path d="M531.5 9 A3.1 3.1 0 1 0 535.7 9 M533.6 7 V11" fill="none" stroke="#4f4a48" stroke-width="1.15"/></g>
<g transform="translate(559,479)"><circle cx="0" cy=".8" r="10.2" fill="#000" opacity=".13"/><circle r="9.7" fill="#d4d0ce"/><clipPath id="c17"><circle r="9.5"/></clipPath><g clip-path="url(#c17)"><rect x="-10" y="-3.3" width="20" height="4.3" fill="#e2c0b0"/><rect x="-10" y="1" width="20" height="9" fill="#b8b6b4"/></g><circle r="9.7" fill="none" stroke="#7c6963" stroke-width="1"/><path d="M.5 -6 V-.3" stroke="#444" stroke-width="1.2"/></g>
<path d="M234.5 497 H245.5 L240 503.5 Z" fill="#242424"/>
<circle cx="448.6" cy="504.9" r="11.4" fill="url(#ks)"/><circle cx="448.3" cy="503.8" r="9.9" fill="url(#kg)" stroke="#191919" stroke-width="1.1"/><path d="M448.3 498 V504" stroke="#111" stroke-width="1.2"/>
<g transform="translate(0,494)"><path d="M470 .5 H498.5 V19.5 H465.5 V5 Z" fill="#373d3a" stroke="#1e1e1e" stroke-width="1.1"/><path d="M470 19 L474.8 1 H479 L473.6 19 Z" fill="#1fc0a0"/><path d="M475.8 19 L480.4 1 H484.6 L480.6 19 Z" fill="#5a5a30"/><path d="M482 19 L486.8 1 H491 L487.2 19 Z" fill="#2f5068"/></g>
<g transform="translate(0,494)"><path d="M511.5 .5 H541.5 V19.5 H506.5 V5.5 Z" fill="#78b29a"/><path d="M511.5 .5 H526 V19.5 H506.5 V5.5 Z" fill="#698178"/><path d="M517.5 2 H525.5" stroke="#4f615a" stroke-width="1.5"/><path d="M525.5 2 H536" stroke="#5a8674" stroke-width="1.5"/><path d="M511.5 .5 H541.5 V19.5 H506.5 V5.5 Z" fill="none" stroke="#416b5f" stroke-width="1.2"/><path d="M531.5 9 A3.1 3.1 0 1 0 535.7 9 M533.6 7 V11" fill="none" stroke="#424e4a" stroke-width="1.15"/></g>
<g transform="translate(559,504)"><circle cx="0" cy=".8" r="10.2" fill="#000" opacity=".13"/><circle r="9.7" fill="#b8d0c8"/><clipPath id="c18"><circle r="9.5"/></clipPath><g clip-path="url(#c18)"><rect x="-10" y="1" width="20" height="3.5" fill="#b2c8b8"/><rect x="-10" y="4.5" width="20" height="5.5" fill="#98b4bc"/></g><circle r="9.7" fill="none" stroke="#4c7a68" stroke-width="1"/><path d="M.5 -6 V-.3" stroke="#444" stroke-width="1.2"/></g>
<circle cx="448.6" cy="529.9" r="11.4" fill="url(#ks)"/><circle cx="448.3" cy="528.8" r="9.9" fill="url(#kg)" stroke="#191919" stroke-width="1.1"/><path d="M448.3 523 V529" stroke="#111" stroke-width="1.2"/>
<g transform="translate(0,519)"><path d="M470 .5 H498.5 V19.5 H465.5 V5 Z" fill="#373d3a" stroke="#1e1e1e" stroke-width="1.1"/><path d="M470 19 L474.8 1 H479 L473.6 19 Z" fill="#1fc0a0"/><path d="M475.8 19 L480.4 1 H484.6 L480.6 19 Z" fill="#5a5a30"/><path d="M482 19 L486.8 1 H491 L487.2 19 Z" fill="#2f5068"/></g>
<g transform="translate(0,519)"><path d="M511.5 .5 H541.5 V19.5 H506.5 V5.5 Z" fill="#78b29a"/><path d="M511.5 .5 H526 V19.5 H506.5 V5.5 Z" fill="#698178"/><path d="M517.5 2 H525.5" stroke="#4f615a" stroke-width="1.5"/><path d="M525.5 2 H536" stroke="#5a8674" stroke-width="1.5"/><path d="M511.5 .5 H541.5 V19.5 H506.5 V5.5 Z" fill="none" stroke="#416b5f" stroke-width="1.2"/><path d="M531.5 9 A3.1 3.1 0 1 0 535.7 9 M533.6 7 V11" fill="none" stroke="#424e4a" stroke-width="1.15"/></g>
<g transform="translate(559,529)"><circle cx="0" cy=".8" r="10.2" fill="#000" opacity=".13"/><circle r="9.7" fill="#b8d0c8"/><clipPath id="c19"><circle r="9.5"/></clipPath><g clip-path="url(#c19)"><rect x="-10" y="1" width="20" height="3.5" fill="#b2c8b8"/><rect x="-10" y="4.5" width="20" height="5.5" fill="#98b4bc"/></g><circle r="9.7" fill="none" stroke="#4c7a68" stroke-width="1"/><path d="M.5 -6 V-.3" stroke="#444" stroke-width="1.2"/></g>
<circle cx="448.6" cy="554.9" r="11.4" fill="url(#ks)"/><circle cx="448.3" cy="553.8" r="9.9" fill="url(#kg)" stroke="#191919" stroke-width="1.1"/><path d="M448.3 548 V554" stroke="#111" stroke-width="1.2"/>
<g transform="translate(0,544)"><path d="M470 .5 H498.5 V19.5 H465.5 V5 Z" fill="#373d3a" stroke="#1e1e1e" stroke-width="1.1"/><path d="M470 19 L474.8 1 H479 L473.6 19 Z" fill="#1fc0a0"/><path d="M475.8 19 L480.4 1 H484.6 L480.6 19 Z" fill="#5a5a30"/><path d="M482 19 L486.8 1 H491 L487.2 19 Z" fill="#2f5068"/></g>
<g transform="translate(0,544)"><path d="M511.5 .5 H541.5 V19.5 H506.5 V5.5 Z" fill="#78b29a"/><path d="M511.5 .5 H526 V19.5 H506.5 V5.5 Z" fill="#698178"/><path d="M517.5 2 H525.5" stroke="#4f615a" stroke-width="1.5"/><path d="M525.5 2 H536" stroke="#5a8674" stroke-width="1.5"/><path d="M511.5 .5 H541.5 V19.5 H506.5 V5.5 Z" fill="none" stroke="#416b5f" stroke-width="1.2"/><path d="M531.5 9 A3.1 3.1 0 1 0 535.7 9 M533.6 7 V11" fill="none" stroke="#424e4a" stroke-width="1.15"/></g>
<g transform="translate(559,554)"><circle cx="0" cy=".8" r="10.2" fill="#000" opacity=".13"/><circle r="9.7" fill="#b8d0c8"/><clipPath id="c20"><circle r="9.5"/></clipPath><g clip-path="url(#c20)"><rect x="-10" y="1" width="20" height="3.5" fill="#b2c8b8"/><rect x="-10" y="4.5" width="20" height="5.5" fill="#98b4bc"/></g><circle r="9.7" fill="none" stroke="#4c7a68" stroke-width="1"/><path d="M.5 -6 V-.3" stroke="#444" stroke-width="1.2"/></g>
<circle cx="448.6" cy="579.9" r="11.4" fill="url(#ks)"/><circle cx="448.3" cy="578.8" r="9.9" fill="url(#kg)" stroke="#191919" stroke-width="1.1"/><path d="M448.3 573 V579" stroke="#111" stroke-width="1.2"/>
<g transform="translate(0,569)"><path d="M470 .5 H498.5 V19.5 H465.5 V5 Z" fill="#373d3a" stroke="#1e1e1e" stroke-width="1.1"/><path d="M470 19 L474.8 1 H479 L473.6 19 Z" fill="#1fc0a0"/><path d="M475.8 19 L480.4 1 H484.6 L480.6 19 Z" fill="#5a5a30"/><path d="M482 19 L486.8 1 H491 L487.2 19 Z" fill="#2f5068"/></g>
<g transform="translate(0,569)"><path d="M511.5 .5 H541.5 V19.5 H506.5 V5.5 Z" fill="#78b29a"/><path d="M511.5 .5 H526 V19.5 H506.5 V5.5 Z" fill="#698178"/><path d="M517.5 2 H525.5" stroke="#4f615a" stroke-width="1.5"/><path d="M525.5 2 H536" stroke="#5a8674" stroke-width="1.5"/><path d="M511.5 .5 H541.5 V19.5 H506.5 V5.5 Z" fill="none" stroke="#416b5f" stroke-width="1.2"/><path d="M531.5 9 A3.1 3.1 0 1 0 535.7 9 M533.6 7 V11" fill="none" stroke="#424e4a" stroke-width="1.15"/></g>
<g transform="translate(559,579)"><circle cx="0" cy=".8" r="10.2" fill="#000" opacity=".13"/><circle r="9.7" fill="#b8d0c8"/><clipPath id="c21"><circle r="9.5"/></clipPath><g clip-path="url(#c21)"><rect x="-10" y="1" width="20" height="3.5" fill="#b2c8b8"/><rect x="-10" y="4.5" width="20" height="5.5" fill="#98b4bc"/></g><circle r="9.7" fill="none" stroke="#4c7a68" stroke-width="1"/><path d="M.5 -6 V-.3" stroke="#444" stroke-width="1.2"/></g>
<circle cx="448.6" cy="604.9" r="11.4" fill="url(#ks)"/><circle cx="448.3" cy="603.8" r="9.9" fill="url(#kg)" stroke="#191919" stroke-width="1.1"/><path d="M448.3 598 V604" stroke="#111" stroke-width="1.2"/>
<g transform="translate(0,594)"><path d="M470 .5 H498.5 V19.5 H465.5 V5 Z" fill="#373d3a" stroke="#1e1e1e" stroke-width="1.1"/><path d="M470 19 L474.8 1 H479 L473.6 19 Z" fill="#1fc0a0"/><path d="M475.8 19 L480.4 1 H484.6 L480.6 19 Z" fill="#5a5a30"/><path d="M482 19 L486.8 1 H491 L487.2 19 Z" fill="#2f5068"/></g>
<g transform="translate(0,594)"><path d="M511.5 .5 H541.5 V19.5 H506.5 V5.5 Z" fill="#78b29a"/><path d="M511.5 .5 H526 V19.5 H506.5 V5.5 Z" fill="#698178"/><path d="M517.5 2 H525.5" stroke="#4f615a" stroke-width="1.5"/><path d="M525.5 2 H536" stroke="#5a8674" stroke-width="1.5"/><path d="M511.5 .5 H541.5 V19.5 H506.5 V5.5 Z" fill="none" stroke="#416b5f" stroke-width="1.2"/><path d="M531.5 9 A3.1 3.1 0 1 0 535.7 9 M533.6 7 V11" fill="none" stroke="#424e4a" stroke-width="1.15"/></g>
<g transform="translate(559,604)"><circle cx="0" cy=".8" r="10.2" fill="#000" opacity=".13"/><circle r="9.7" fill="#b8d0c8"/><clipPath id="c22"><circle r="9.5"/></clipPath><g clip-path="url(#c22)"><rect x="-10" y="1" width="20" height="3.5" fill="#b2c8b8"/><rect x="-10" y="4.5" width="20" height="5.5" fill="#98b4bc"/></g><circle r="9.7" fill="none" stroke="#4c7a68" stroke-width="1"/><path d="M.5 -6 V-.3" stroke="#444" stroke-width="1.2"/></g>
<path d="M246 629 H251 L254 631.5 V635.5 H246 Z" fill="#437c66"/>
<circle cx="448.6" cy="629.9" r="11.4" fill="url(#ks)"/><circle cx="448.3" cy="628.8" r="9.9" fill="url(#kg)" stroke="#191919" stroke-width="1.1"/><path d="M448.3 623 V629" stroke="#111" stroke-width="1.2"/>
<g transform="translate(0,619)"><path d="M470 .5 H498.5 V19.5 H465.5 V5 Z" fill="#373d3a" stroke="#1e1e1e" stroke-width="1.1"/><path d="M470 19 L474.8 1 H479 L473.6 19 Z" fill="#1fc0a0"/><path d="M475.8 19 L480.4 1 H484.6 L480.6 19 Z" fill="#5a5a30"/><path d="M482 19 L486.8 1 H491 L487.2 19 Z" fill="#2f5068"/></g>
<g transform="translate(0,619)"><path d="M511.5 .5 H541.5 V19.5 H506.5 V5.5 Z" fill="#78b29a"/><path d="M511.5 .5 H526 V19.5 H506.5 V5.5 Z" fill="#698178"/><path d="M517.5 2 H525.5" stroke="#4f615a" stroke-width="1.5"/><path d="M525.5 2 H536" stroke="#5a8674" stroke-width="1.5"/><path d="M511.5 .5 H541.5 V19.5 H506.5 V5.5 Z" fill="none" stroke="#416b5f" stroke-width="1.2"/><path d="M531.5 9 A3.1 3.1 0 1 0 535.7 9 M533.6 7 V11" fill="none" stroke="#424e4a" stroke-width="1.15"/></g>
<g transform="translate(559,629)"><circle cx="0" cy=".8" r="10.2" fill="#000" opacity=".13"/><circle r="9.7" fill="#b8d0c8"/><clipPath id="c23"><circle r="9.5"/></clipPath><g clip-path="url(#c23)"><rect x="-10" y="1" width="20" height="3.5" fill="#b2c8b8"/><rect x="-10" y="4.5" width="20" height="5.5" fill="#98b4bc"/></g><circle r="9.7" fill="none" stroke="#4c7a68" stroke-width="1"/><path d="M.5 -6 V-.3" stroke="#444" stroke-width="1.2"/></g>
</svg>
<div class="rt" style="left:469.5px;top:75.4px">Route</div>
<div class="fx" style="left:511.5px;top:76.4px">FX</div>
<div class="rt" style="left:469.5px;top:100.4px">Route</div>
<div class="fx" style="left:511.5px;top:101.4px">FX</div>
<div class="rt" style="left:469.5px;top:125.4px">Route</div>
<div class="fx" style="left:511.5px;top:126.4px">FX</div>
<div class="rt" style="left:469.5px;top:150.4px">Route</div>
<div class="fx" style="left:511.5px;top:151.4px">FX</div>
<div class="rt" style="left:469.5px;top:175.4px">Route</div>
<div class="fx" style="left:511.5px;top:176.4px">FX</div>
<div class="rt" style="left:469.5px;top:200.4px">Route</div>
<div class="fx" style="left:511.5px;top:201.4px">FX</div>
<div class="rt" style="left:469.5px;top:225.4px">Route</div>
<div class="fx" style="left:511.5px;top:226.4px">FX</div>
<div class="rt" style="left:469.5px;top:250.4px">Route</div>
<div class="fx" style="left:511.5px;top:251.4px">FX</div>
<div class="rt" style="left:469.5px;top:275.4px">Route</div>
<div class="fx" style="left:511.5px;top:276.4px">FX</div>
<div class="rt" style="left:469.5px;top:300.4px">Route</div>
<div class="fx" style="left:511.5px;top:301.4px">FX</div>
<div class="rt" style="left:469.5px;top:325.4px">Route</div>
<div class="fx" style="left:511.5px;top:326.4px">FX</div>
<div class="rt" style="left:469.5px;top:350.4px">Route</div>
<div class="fx" style="left:511.5px;top:351.4px">FX</div>
<div class="rt" style="left:469.5px;top:375.4px">Route</div>
<div class="fx" style="left:511.5px;top:376.4px">FX</div>
<div class="rt" style="left:469.5px;top:400.4px">Route</div>
<div class="fx" style="left:511.5px;top:401.4px">FX</div>
<div class="rt" style="left:469.5px;top:425.4px">Route</div>
<div class="fx" style="left:511.5px;top:426.4px">FX</div>
<div class="rt" style="left:469.5px;top:450.4px">Route</div>
<div class="fx" style="left:511.5px;top:451.4px">FX</div>
<div class="rt" style="left:469.5px;top:475.4px">Route</div>
<div class="fx" style="left:511.5px;top:476.4px">FX</div>
<div class="rt" style="left:469.5px;top:500.4px">Route</div>
<div class="fx" style="left:511.5px;top:501.4px">FX</div>
<div class="rt" style="left:469.5px;top:525.4px">Route</div>
<div class="fx" style="left:511.5px;top:526.4px">FX</div>
<div class="rt" style="left:469.5px;top:550.4px">Route</div>
<div class="fx" style="left:511.5px;top:551.4px">FX</div>
<div class="rt" style="left:469.5px;top:575.4px">Route</div>
<div class="fx" style="left:511.5px;top:576.4px">FX</div>
<div class="rt" style="left:469.5px;top:600.4px">Route</div>
<div class="fx" style="left:511.5px;top:601.4px">FX</div>
<div class="rt" style="left:469.5px;top:625.4px">Route</div>
<div class="fx" style="left:511.5px;top:626.4px">FX</div>
<svg class="a" style="left:680px;top:25px" width="788" height="45" viewBox="680 25 788 45">
<path d="M687.5 29.5 V67" stroke="#8c8c8c" stroke-width="1"/>
<path d="M694.5 63.2 V67" stroke="#9a9a9a" stroke-width="1"/>
<path d="M702.5 63.2 V67" stroke="#9a9a9a" stroke-width="1"/>
<path d="M709.5 63.2 V67" stroke="#9a9a9a" stroke-width="1"/>
<path d="M717.5 63.2 V67" stroke="#9a9a9a" stroke-width="1"/>
<path d="M724.5 61 V67" stroke="#9a9a9a" stroke-width="1"/>
<path d="M732.5 63.2 V67" stroke="#9a9a9a" stroke-width="1"/>
<path d="M739.5 63.2 V67" stroke="#9a9a9a" stroke-width="1"/>
<path d="M747.5 63.2 V67" stroke="#9a9a9a" stroke-width="1"/>
<path d="M754.5 63.2 V67" stroke="#9a9a9a" stroke-width="1"/>
<path d="M762.5 58.8 V67" stroke="#9a9a9a" stroke-width="1"/>
<path d="M769.5 63.2 V67" stroke="#9a9a9a" stroke-width="1"/>
<path d="M777.5 63.2 V67" stroke="#9a9a9a" stroke-width="1"/>
<path d="M784.5 63.2 V67" stroke="#9a9a9a" stroke-width="1"/>
<path d="M792.5 63.2 V67" stroke="#9a9a9a" stroke-width="1"/>
<path d="M799.5 61 V67" stroke="#9a9a9a" stroke-width="1"/>
<path d="M806.5 63.2 V67" stroke="#9a9a9a" stroke-width="1"/>
<path d="M814.5 63.2 V67" stroke="#9a9a9a" stroke-width="1"/>
<path d="M821.5 63.2 V67" stroke="#9a9a9a" stroke-width="1"/>
<path d="M829.5 63.2 V67" stroke="#9a9a9a" stroke-width="1"/>
<path d="M836.5 40.5 V67" stroke="#9a9a9a" stroke-width="1"/>
<path d="M844.5 63.2 V67" stroke="#9a9a9a" stroke-width="1"/>
<path d="M851.5 63.2 V67" stroke="#9a9a9a" stroke-width="1"/>
<path d="M859.5 63.2 V67" stroke="#9a9a9a" stroke-width="1"/>
<path d="M866.5 63.2 V67" stroke="#9a9a9a" stroke-width="1"/>
<path d="M874.5 61 V67" stroke="#9a9a9a" stroke-width="1"/>
<path d="M881.5 63.2 V67" stroke="#9a9a9a" stroke-width="1"/>
<path d="M889.5 63.2 V67" stroke="#9a9a9a" stroke-width="1"/>
<path d="M896.5 63.2 V67" stroke="#9a9a9a" stroke-width="1"/>
<path d="M904.5 63.2 V67" stroke="#9a9a9a" stroke-width="1"/>
<path d="M911.5 58.8 V67" stroke="#9a9a9a" stroke-width="1"/>
<path d="M918.5 63.2 V67" stroke="#9a9a9a" stroke-width="1"/>
<path d="M926.5 63.2 V67" stroke="#9a9a9a" stroke-width="1"/>
<path d="M933.5 63.2 V67" stroke="#9a9a9a" stroke-width="1"/>
<path d="M941.5 63.2 V67" stroke="#9a9a9a" stroke-width="1"/>
<path d="M948.5 61 V67" stroke="#9a9a9a" stroke-width="1"/>
<path d="M956.5 63.2 V67" stroke="#9a9a9a" stroke-width="1"/>
<path d="M963.5 63.2 V67" stroke="#9a9a9a" stroke-width="1"/>
<path d="M971.5 63.2 V67" stroke="#9a9a9a" stroke-width="1"/>
<path d="M978.5 63.2 V67" stroke="#9a9a9a" stroke-width="1"/>
<path d="M986.5 40.5 V67" stroke="#9a9a9a" stroke-width="1"/>
<path d="M993.5 63.2 V67" stroke="#9a9a9a" stroke-width="1"/>
<path d="M1001.5 63.2 V67" stroke="#9a9a9a" stroke-width="1"/>
<path d="M1008.5 63.2 V67" stroke="#9a9a9a" stroke-width="1"/>
<path d="M1016.5 63.2 V67" stroke="#9a9a9a" stroke-width="1"/>
<path d="M1023.5 61 V67" stroke="#9a9a9a" stroke-width="1"/>
<path d="M1031.5 63.2 V67" stroke="#9a9a9a" stroke-width="1"/>
<path d="M1038.5 63.2 V67" stroke="#9a9a9a" stroke-width="1"/>
<path d="M1045.5 63.2 V67" stroke="#9a9a9a" stroke-width="1"/>
<path d="M1053.5 63.2 V67" stroke="#9a9a9a" stroke-width="1"/>
<path d="M1060.5 58.8 V67" stroke="#9a9a9a" stroke-width="1"/>
<path d="M1068.5 63.2 V67" stroke="#9a9a9a" stroke-width="1"/>
<path d="M1075.5 63.2 V67" stroke="#9a9a9a" stroke-width="1"/>
<path d="M1083.5 63.2 V67" stroke="#9a9a9a" stroke-width="1"/>
<path d="M1090.5 63.2 V67" stroke="#9a9a9a" stroke-width="1"/>
<path d="M1098.5 61 V67" stroke="#9a9a9a" stroke-width="1"/>
<path d="M1105.5 63.2 V67" stroke="#9a9a9a" stroke-width="1"/>
<path d="M1113.5 63.2 V67" stroke="#9a9a9a" stroke-width="1"/>
<path d="M1120.5 63.2 V67" stroke="#9a9a9a" stroke-width="1"/>
<path d="M1128.5 63.2 V67" stroke="#9a9a9a" stroke-width="1"/>
<path d="M1135.5 40.5 V67" stroke="#9a9a9a" stroke-width="1"/>
<path d="M1143.5 63.2 V67" stroke="#9a9a9a" stroke-width="1"/>
<path d="M1150.5 63.2 V67" stroke="#9a9a9a" stroke-width="1"/>
<path d="M1157.5 63.2 V67" stroke="#9a9a9a" stroke-width="1"/>
<path d="M1165.5 63.2 V67" stroke="#9a9a9a" stroke-width="1"/>
<path d="M1172.5 61 V67" stroke="#9a9a9a" stroke-width="1"/>
<path d="M1180.5 63.2 V67" stroke="#9a9a9a" stroke-width="1"/>
<path d="M1187.5 63.2 V67" stroke="#9a9a9a" stroke-width="1"/>
<path d="M1195.5 63.2 V67" stroke="#9a9a9a" stroke-width="1"/>
<path d="M1202.5 63.2 V67" stroke="#9a9a9a" stroke-width="1"/>
<path d="M1210.5 58.8 V67" stroke="#9a9a9a" stroke-width="1"/>
<path d="M1217.5 63.2 V67" stroke="#9a9a9a" stroke-width="1"/>
<path d="M1225.5 63.2 V67" stroke="#9a9a9a" stroke-width="1"/>
<path d="M1232.5 63.2 V67" stroke="#9a9a9a" stroke-width="1"/>
<path d="M1240.5 63.2 V67" stroke="#9a9a9a" stroke-width="1"/>
<path d="M1247.5 61 V67" stroke="#9a9a9a" stroke-width="1"/>
<path d="M1255.5 63.2 V67" stroke="#9a9a9a" stroke-width="1"/>
<path d="M1262.5 63.2 V67" stroke="#9a9a9a" stroke-width="1"/>
<path d="M1269.5 63.2 V67" stroke="#9a9a9a" stroke-width="1"/>
<path d="M1277.5 63.2 V67" stroke="#9a9a9a" stroke-width="1"/>
<path d="M1284.5 40.5 V67" stroke="#9a9a9a" stroke-width="1"/>
<path d="M1292.5 63.2 V67" stroke="#9a9a9a" stroke-width="1"/>
<path d="M1299.5 63.2 V67" stroke="#9a9a9a" stroke-width="1"/>
<path d="M1307.5 63.2 V67" stroke="#9a9a9a" stroke-width="1"/>
<path d="M1314.5 63.2 V67" stroke="#9a9a9a" stroke-width="1"/>
<path d="M1322.5 61 V67" stroke="#9a9a9a" stroke-width="1"/>
<path d="M1329.5 63.2 V67" stroke="#9a9a9a" stroke-width="1"/>
<path d="M1337.5 63.2 V67" stroke="#9a9a9a" stroke-width="1"/>
<path d="M1344.5 63.2 V67" stroke="#9a9a9a" stroke-width="1"/>
<path d="M1352.5 63.2 V67" stroke="#9a9a9a" stroke-width="1"/>
<path d="M1359.5 58.8 V67" stroke="#9a9a9a" stroke-width="1"/>
<path d="M1367.5 63.2 V67" stroke="#9a9a9a" stroke-width="1"/>
<path d="M1374.5 63.2 V67" stroke="#9a9a9a" stroke-width="1"/>
<path d="M1381.5 63.2 V67" stroke="#9a9a9a" stroke-width="1"/>
<path d="M1389.5 63.2 V67" stroke="#9a9a9a" stroke-width="1"/>
<path d="M1396.5 61 V67" stroke="#9a9a9a" stroke-width="1"/>
<path d="M1404.5 63.2 V67" stroke="#9a9a9a" stroke-width="1"/>
<path d="M1411.5 63.2 V67" stroke="#9a9a9a" stroke-width="1"/>
<path d="M1419.5 63.2 V67" stroke="#9a9a9a" stroke-width="1"/>
<path d="M1426.5 63.2 V67" stroke="#9a9a9a" stroke-width="1"/>
<path d="M1434.5 40.5 V67" stroke="#9a9a9a" stroke-width="1"/>
<path d="M1441.5 63.2 V67" stroke="#9a9a9a" stroke-width="1"/>
<path d="M1449.5 63.2 V67" stroke="#9a9a9a" stroke-width="1"/>
<path d="M1456.5 63.2 V67" stroke="#9a9a9a" stroke-width="1"/>
<path d="M1464.5 63.2 V67" stroke="#9a9a9a" stroke-width="1"/>
</svg>
<div class="t" style="left:689.5px;top:29.8px;font-size:10.8px;color:#d6d6d6">120</div>
<div class="rl" style="left:690.5px;top:42.5px">00:00:00:00</div>
<div class="rl" style="left:839.5px;top:42.5px">00:00:15:00</div>
<div class="rl" style="left:989.5px;top:42.5px">00:00:30:00</div>
<div class="rl" style="left:1138.5px;top:42.5px">00:00:45:00</div>
<div class="rl" style="left:1287.5px;top:42.5px">00:01:00:00</div>
<div class="rl" style="left:1437.5px;top:42.5px">00:01:15:00</div>
<div class="a" style="left:687px;top:67px;width:763px;height:697px;background:#444444"></div>
<svg class="a" style="left:687px;top:67px" width="763" height="697" viewBox="687 67 763 697">
<path d="M765 67 H767 Q772 72.5 784.3 73.3 V74.5 Q774 75.5 769.5 80 Q774 84.5 784.3 85.5 V86.7 Q772 87.5 768 92 H765 Z" fill="#666666"/>
<rect x="764" y="92" width="22.299999999999955" height="100" fill="#c79474"/>
<rect x="786.0" y="92" width="1" height="100" fill="#3a3836"/>
<rect x="764" y="168" width="22.299999999999955" height="24" fill="#b08e7e"/>
<rect x="768.5" y="117" width="6" height="25" fill="#b89078"/><rect x="768.5" y="142" width="7" height="25" fill="#b89078"/>
<path d="M765 117 H769.5 L774.5 121.45 V125.05 L769 129.5 L774.5 133.95 V137.55 L769.5 142 H765 Z" fill="#43342f"/>
<path d="M774.5 117 V142" stroke="#5e3c28" stroke-width="1"/>
<path d="M765 142 H769.3 L775.5 147.25 V149.25 L768.8 154.5 L775.5 159.75 V161.75 L769.3 167 H765 Z" fill="#43342f"/>
<path d="M775.5 142 V167" stroke="#5e3c28" stroke-width="1"/>
<path d="M765 167.5 H767.5 L767.5 167.85 Q772.624 171.738 785.8 172.65 V173.85 Q772.624 174.762 767.5 178.65 L767.5 180.35 Q772.624 184.238 785.8 185.15 V186.35 Q772.624 187.262 767.5 191.15 L767.5 191.5 H765 Z" fill="#43342f"/>
<path d="M767.5 118 Q770 170 785.3 191.5" fill="none" stroke="#2e2420" stroke-width=".8"/>
<path d="M785.8 117 V192" stroke="#7a5038" stroke-width="1" opacity=".7"/>
<text x="769" y="109.5" font-family="Liberation Sans, sans-serif" font-size="9.5" fill="#35200f">@.</text>
<path d="M805 67 H807 Q812 72.5 823.4 73.3 V74.5 Q814 75.5 809.5 80 Q814 84.5 823.4 85.5 V86.7 Q812 87.5 808 92 H805 Z" fill="#666666"/>
<rect x="804" y="92" width="21.399999999999977" height="100" fill="#c79474"/>
<rect x="825.1" y="92" width="1" height="100" fill="#3a3836"/>
<rect x="804" y="168" width="21.399999999999977" height="24" fill="#b08e7e"/>
<rect x="808.5" y="117" width="6" height="25" fill="#b89078"/><rect x="808.5" y="142" width="7" height="25" fill="#b89078"/>
<path d="M805 117 H809.5 L814.5 121.45 V125.05 L809 129.5 L814.5 133.95 V137.55 L809.5 142 H805 Z" fill="#43342f"/>
<path d="M814.5 117 V142" stroke="#5e3c28" stroke-width="1"/>
<path d="M805 142 H809.3 L815.5 147.25 V149.25 L808.8 154.5 L815.5 159.75 V161.75 L809.3 167 H805 Z" fill="#43342f"/>
<path d="M815.5 142 V167" stroke="#5e3c28" stroke-width="1"/>
<path d="M805 167.5 H807.5 L807.5 167.85 Q812.372 171.738 824.9 172.65 V173.85 Q812.372 174.762 807.5 178.65 L807.5 180.35 Q812.372 184.238 824.9 185.15 V186.35 Q812.372 187.262 807.5 191.15 L807.5 191.5 H805 Z" fill="#43342f"/>
<path d="M807.5 118 Q810 170 824.4 191.5" fill="none" stroke="#2e2420" stroke-width=".8"/>
<path d="M824.9 117 V192" stroke="#7a5038" stroke-width="1" opacity=".7"/>
<text x="809" y="109.5" font-family="Liberation Sans, sans-serif" font-size="9.5" fill="#35200f">@.</text>
<path d="M843 67 H845 Q850 72.5 862.3 73.3 V74.5 Q852 75.5 847.5 80 Q852 84.5 862.3 85.5 V86.7 Q850 87.5 846 92 H843 Z" fill="#666666"/>
<rect x="842" y="92" width="22.299999999999955" height="100" fill="#c79474"/>
<rect x="864.0" y="92" width="1" height="100" fill="#3a3836"/>
<rect x="842" y="168" width="22.299999999999955" height="24" fill="#b08e7e"/>
<rect x="846.5" y="117" width="6" height="25" fill="#b89078"/><rect x="846.5" y="142" width="7" height="25" fill="#b89078"/>
<path d="M843 117 H847.5 L852.5 121.45 V125.05 L847 129.5 L852.5 133.95 V137.55 L847.5 142 H843 Z" fill="#43342f"/>
<path d="M852.5 117 V142" stroke="#5e3c28" stroke-width="1"/>
<path d="M843 142 H847.3 L853.5 147.25 V149.25 L846.8 154.5 L853.5 159.75 V161.75 L847.3 167 H843 Z" fill="#43342f"/>
<path d="M853.5 142 V167" stroke="#5e3c28" stroke-width="1"/>
<path d="M843 167.5 H845.5 L845.5 167.85 Q850.624 171.738 863.8 172.65 V173.85 Q850.624 174.762 845.5 178.65 L845.5 180.35 Q850.624 184.238 863.8 185.15 V186.35 Q850.624 187.262 845.5 191.15 L845.5 191.5 H843 Z" fill="#43342f"/>
<path d="M845.5 118 Q848 170 863.3 191.5" fill="none" stroke="#2e2420" stroke-width=".8"/>
<path d="M863.8 117 V192" stroke="#7a5038" stroke-width="1" opacity=".7"/>
<text x="847" y="109.5" font-family="Liberation Sans, sans-serif" font-size="9.5" fill="#35200f">@.</text>
<path d="M883 67 H885 Q890 72.5 901.4 73.3 V74.5 Q892 75.5 887.5 80 Q892 84.5 901.4 85.5 V86.7 Q890 87.5 886 92 H883 Z" fill="#666666"/>
<rect x="882" y="92" width="21.399999999999977" height="100" fill="#c79474"/>
<rect x="903.1" y="92" width="1" height="100" fill="#3a3836"/>
<rect x="882" y="168" width="21.399999999999977" height="24" fill="#b08e7e"/>
<rect x="886.5" y="117" width="6" height="25" fill="#b89078"/><rect x="886.5" y="142" width="7" height="25" fill="#b89078"/>
<path d="M883 117 H887.5 L892.5 121.45 V125.05 L887 129.5 L892.5 133.95 V137.55 L887.5 142 H883 Z" fill="#43342f"/>
<path d="M892.5 117 V142" stroke="#5e3c28" stroke-width="1"/>
<path d="M883 142 H887.3 L893.5 147.25 V149.25 L886.8 154.5 L893.5 159.75 V161.75 L887.3 167 H883 Z" fill="#43342f"/>
<path d="M893.5 142 V167" stroke="#5e3c28" stroke-width="1"/>
<path d="M883 167.5 H885.5 L885.5 167.85 Q890.372 171.738 902.9 172.65 V173.85 Q890.372 174.762 885.5 178.65 L885.5 180.35 Q890.372 184.238 902.9 185.15 V186.35 Q890.372 187.262 885.5 191.15 L885.5 191.5 H883 Z" fill="#43342f"/>
<path d="M885.5 118 Q888 170 902.4 191.5" fill="none" stroke="#2e2420" stroke-width=".8"/>
<path d="M902.9 117 V192" stroke="#7a5038" stroke-width="1" opacity=".7"/>
<text x="887" y="109.5" font-family="Liberation Sans, sans-serif" font-size="9.5" fill="#35200f">@.</text>
<path d="M1007 205 C1006 198 1008 192.5 1011 192.5 C1015 193 1017 197 1031.5 198.5 C1019 200 1015 202 1012 204.5 C1016 205 1018 208.5 1031.5 210.5 C1019 212 1015 215 1011 217 H1008 C1007 214 1006 210 1007 205 Z" fill="#666666"/>
<path d="M1008 217 H1011 C1013 221 1013.5 226 1011 229.5 C1013.5 233 1013.5 238 1012 242 H1007.5 C1006.5 238 1007 233 1009 229.5 C1007 226 1006.5 221 1008 217 Z" fill="#666666"/>
<rect x="1007" y="242" width="6.5" height="75" fill="#8aadb4"/>
<rect x="1013.2" y="242" width="1" height="75" fill="#3a3c3c"/>
<path d="M1009 268 C1013.5 266 1013.5 276 1011 279.5 C1014 283 1013.5 289 1011 291.5 H1008.5 C1007.5 285 1007.5 274 1009 268 Z" fill="#2c3a3e"/>
<path d="M1008.5 293 V316 M1012.0 293 V316 M1008.5 316 L1011.5 294" stroke="#3a5a62" stroke-width=".9" fill="none"/>
<path d="M1010 344.5 C1014 343 1017 345.5 1019 347 L1022 348 L1031.5 348.4 V349.6 L1022 350 L1019 351 C1017 352.5 1014 355 1010 353.5 Z" fill="#666666"/>
<path d="M1010 356.5 C1014 355 1017 357.5 1019 359 L1022 360 L1031.5 360.4 V361.6 L1022 362 L1019 363 C1017 364.5 1014 367 1010 365.5 Z" fill="#666666"/>
<rect x="1009" y="367" width="23.5" height="75" fill="#bd9b90"/>
<rect x="1009" y="393" width="23.5" height="49" fill="#ad8c7d"/>
<rect x="1009" y="416" width="23.5" height="1.5" fill="#b89588"/>
<rect x="1032.2" y="367" width="1" height="75" fill="#383838"/>
<path d="M1010 395 L1014 394.5 C1017 396 1018 398 1031.5 398.5 V399.5 C1018 400 1017 402 1014 403.5 L1010 403 Z" fill="#43342f"/>
<path d="M1010 407 L1014 406.5 C1017 408 1018 410 1031.5 410.5 V411.5 C1018 412 1017 414 1014 415.5 L1010 415 Z" fill="#43342f"/>
<path d="M1010 420 L1014 419.5 C1017 421 1018 423 1031.5 423.5 V424.5 C1018 425 1017 427 1014 428.5 L1010 428 Z" fill="#43342f"/>
<path d="M1010 432 L1014 431.5 C1017 433 1018 435 1031.5 435.5 V436.5 C1018 437 1017 439 1014 440.5 L1010 440 Z" fill="#43342f"/>
<path d="M1014.5 392 V442 M1013 393 Q1019 412 1031.5 417 M1017 418 Q1021 436 1031.5 441" fill="none" stroke="#3a2a28" stroke-width=".8"/>
<text x="1014" y="386" font-family="Liberation Sans, sans-serif" font-size="9.3" fill="#30141e">@L</text>
<path d="M1010 492 H1011.5 L1022.0 498.2 V499.2 L1014.5 504.5 L1022.0 509.8 V510.8 L1013 517 H1010 Z" fill="#666666"/>
<rect x="1009" y="517" width="13.200000000000045" height="125" fill="#63b797"/>
<rect x="1021.9000000000001" y="517" width="1" height="125" fill="#383c3a"/>
<rect x="1009" y="567" width="13.200000000000045" height="75" fill="#58a286"/>
<rect x="1015" y="542" width="3" height="25" fill="#5cac8e"/>
<path d="M1009.8 542 H1013.1 L1018.5 547.35 V549.15 L1012.6 554.5 L1018.5 559.85 V561.65 L1013.1 567 H1009.8 Z" fill="#284a3e"/>
<path d="M1018.5 542 V567" stroke="#2a5a48" stroke-width="1"/>
<path d="M1009.8 567.5 H1011.5 L1011.5 567.75 Q1013.74 571.71 1019.5 572.65 V573.85 Q1013.74 574.79 1011.5 578.75 L1011.5 580.25 Q1013.74 584.21 1019.5 585.15 V586.35 Q1013.74 587.29 1011.5 591.25 L1011.5 591.5 H1009.8 Z" fill="#284a3e"/>
<path d="M1019.5 567 V592" stroke="#2a5a48" stroke-width="1"/>
<path d="M1009.8 592.5 H1011.5 L1011.5 592.45 Q1014.356 596.626 1021.7 597.65 V598.85 Q1014.356 599.874 1011.5 604.05 L1011.5 604.95 Q1014.356 609.126 1021.7 610.15 V611.35 Q1014.356 612.374 1011.5 616.55 L1011.5 616.5 H1009.8 Z" fill="#284a3e"/>
<path d="M1011 618 C1016 617.5 1018 621 1021.7 622.3 V623.7 C1018 625 1016 628.5 1011 628 Z" fill="#284a3e"/>
<path d="M1011 630.5 C1016 630.0 1018 633.5 1021.7 634.8 V636.2 C1018 637.5 1016 641.0 1011 640.5 Z" fill="#284a3e"/>
<path d="M1010.5 618 V622 M1010.5 626 V630 M1010.5 634 V638" stroke="#c02020" stroke-width="1"/>
<path d="M1011.5 543 Q1013 600 1021.7 617 M1012 618 Q1014 636 1021.7 641" fill="none" stroke="#1e3a30" stroke-width=".8"/>
<path d="M1021.7 542 V642" stroke="#2c5c4a" stroke-width="1" opacity=".8"/>
<path d="M1053 205 C1052 198 1054 192.5 1057 192.5 C1061 193 1063 197 1076.5 198.5 C1065 200 1061 202 1058 204.5 C1062 205 1064 208.5 1076.5 210.5 C1065 212 1061 215 1057 217 H1054 C1053 214 1052 210 1053 205 Z" fill="#666666"/>
<path d="M1054 217 H1057 C1059 221 1059.5 226 1057 229.5 C1059.5 233 1059.5 238 1058 242 H1053.5 C1052.5 238 1053 233 1055 229.5 C1053 226 1052.5 221 1054 217 Z" fill="#666666"/>
<rect x="1053" y="242" width="6.5" height="75" fill="#8aadb4"/>
<rect x="1059.2" y="242" width="1" height="75" fill="#3a3c3c"/>
<path d="M1055 268 C1059.5 266 1059.5 276 1057 279.5 C1060 283 1059.5 289 1057 291.5 H1054.5 C1053.5 285 1053.5 274 1055 268 Z" fill="#2c3a3e"/>
<path d="M1054.5 293 V316 M1058.0 293 V316 M1054.5 316 L1057.5 294" stroke="#3a5a62" stroke-width=".9" fill="none"/>
<path d="M1056 344.5 C1060 343 1063 345.5 1065 347 L1068 348 L1076.5 348.4 V349.6 L1068 350 L1065 351 C1063 352.5 1060 355 1056 353.5 Z" fill="#666666"/>
<path d="M1056 356.5 C1060 355 1063 357.5 1065 359 L1068 360 L1076.5 360.4 V361.6 L1068 362 L1065 363 C1063 364.5 1060 367 1056 365.5 Z" fill="#666666"/>
<rect x="1055" y="367" width="22.5" height="75" fill="#bd9b90"/>
<rect x="1055" y="393" width="22.5" height="49" fill="#ad8c7d"/>
<rect x="1055" y="416" width="22.5" height="1.5" fill="#b89588"/>
<rect x="1077.2" y="367" width="1" height="75" fill="#383838"/>
<path d="M1056 395 L1060 394.5 C1063 396 1064 398 1076.5 398.5 V399.5 C1064 400 1063 402 1060 403.5 L1056 403 Z" fill="#43342f"/>
<path d="M1056 407 L1060 406.5 C1063 408 1064 410 1076.5 410.5 V411.5 C1064 412 1063 414 1060 415.5 L1056 415 Z" fill="#43342f"/>
<path d="M1056 420 L1060 419.5 C1063 421 1064 423 1076.5 423.5 V424.5 C1064 425 1063 427 1060 428.5 L1056 428 Z" fill="#43342f"/>
<path d="M1056 432 L1060 431.5 C1063 433 1064 435 1076.5 435.5 V436.5 C1064 437 1063 439 1060 440.5 L1056 440 Z" fill="#43342f"/>
<path d="M1060.5 392 V442 M1059 393 Q1065 412 1076.5 417 M1063 418 Q1067 436 1076.5 441" fill="none" stroke="#3a2a28" stroke-width=".8"/>
<text x="1060" y="386" font-family="Liberation Sans, sans-serif" font-size="9.3" fill="#30141e">@.</text>
<path d="M1056 492 H1057.5 L1068.0 498.2 V499.2 L1060.5 504.5 L1068.0 509.8 V510.8 L1059 517 H1056 Z" fill="#666666"/>
<rect x="1055" y="517" width="13.200000000000045" height="125" fill="#63b797"/>
<rect x="1067.9" y="517" width="1" height="125" fill="#383c3a"/>
<rect x="1055" y="567" width="13.200000000000045" height="75" fill="#58a286"/>
<rect x="1061" y="542" width="3" height="25" fill="#5cac8e"/>
<path d="M1055.8 542 H1059.1 L1064.5 547.35 V549.15 L1058.6 554.5 L1064.5 559.85 V561.65 L1059.1 567 H1055.8 Z" fill="#284a3e"/>
<path d="M1064.5 542 V567" stroke="#2a5a48" stroke-width="1"/>
<path d="M1055.8 567.5 H1057.5 L1057.5 567.75 Q1059.74 571.71 1065.5 572.65 V573.85 Q1059.74 574.79 1057.5 578.75 L1057.5 580.25 Q1059.74 584.21 1065.5 585.15 V586.35 Q1059.74 587.29 1057.5 591.25 L1057.5 591.5 H1055.8 Z" fill="#284a3e"/>
<path d="M1065.5 567 V592" stroke="#2a5a48" stroke-width="1"/>
<path d="M1055.8 592.5 H1057.5 L1057.5 592.45 Q1060.356 596.626 1067.7 597.65 V598.85 Q1060.356 599.874 1057.5 604.05 L1057.5 604.95 Q1060.356 609.126 1067.7 610.15 V611.35 Q1060.356 612.374 1057.5 616.55 L1057.5 616.5 H1055.8 Z" fill="#284a3e"/>
<path d="M1057 618 C1062 617.5 1064 621 1067.7 622.3 V623.7 C1064 625 1062 628.5 1057 628 Z" fill="#284a3e"/>
<path d="M1057 630.5 C1062 630.0 1064 633.5 1067.7 634.8 V636.2 C1064 637.5 1062 641.0 1057 640.5 Z" fill="#284a3e"/>
<path d="M1056.5 618 V622 M1056.5 626 V630 M1056.5 634 V638" stroke="#c02020" stroke-width="1"/>
<path d="M1057.5 543 Q1059 600 1067.7 617 M1058 618 Q1060 636 1067.7 641" fill="none" stroke="#1e3a30" stroke-width=".8"/>
<path d="M1067.7 542 V642" stroke="#2c5c4a" stroke-width="1" opacity=".8"/>
<path d="M1092.5 205 C1091.5 198 1093.5 192.5 1096.5 192.5 C1100.5 193 1102.5 197 1110.5 198.5 C1104.5 200 1100.5 202 1097.5 204.5 C1101.5 205 1103.5 208.5 1110.5 210.5 C1104.5 212 1100.5 215 1096.5 217 H1093.5 C1092.5 214 1091.5 210 1092.5 205 Z" fill="#666666"/>
<path d="M1093.5 217 H1096.5 C1098.5 221 1099.0 226 1096.5 229.5 C1099.0 233 1099.0 238 1097.5 242 H1093.0 C1092.0 238 1092.5 233 1094.5 229.5 C1092.5 226 1092.0 221 1093.5 217 Z" fill="#666666"/>
<rect x="1092.5" y="242" width="6.5" height="75" fill="#8aadb4"/>
<rect x="1098.7" y="242" width="1" height="75" fill="#3a3c3c"/>
<path d="M1094.5 268 C1099.0 266 1099.0 276 1096.5 279.5 C1099.5 283 1099.0 289 1096.5 291.5 H1094.0 C1093.0 285 1093.0 274 1094.5 268 Z" fill="#2c3a3e"/>
<path d="M1094.0 293 V316 M1097.5 293 V316 M1094.0 316 L1097 294" stroke="#3a5a62" stroke-width=".9" fill="none"/>
<path d="M1097 344.5 C1101 343 1104 345.5 1106 347 L1109 348 L1110.5 348.4 V349.6 L1109 350 L1106 351 C1104 352.5 1101 355 1097 353.5 Z" fill="#666666"/>
<path d="M1097 356.5 C1101 355 1104 357.5 1106 359 L1109 360 L1110.5 360.4 V361.6 L1109 362 L1106 363 C1104 364.5 1101 367 1097 365.5 Z" fill="#666666"/>
<rect x="1096" y="367" width="15.5" height="75" fill="#bd9b90"/>
<rect x="1096" y="393" width="15.5" height="49" fill="#ad8c7d"/>
<rect x="1096" y="416" width="15.5" height="1.5" fill="#b89588"/>
<rect x="1111.2" y="367" width="1" height="75" fill="#383838"/>
<path d="M1097 395 L1101 394.5 C1104 396 1105 398 1110.5 398.5 V399.5 C1105 400 1104 402 1101 403.5 L1097 403 Z" fill="#43342f"/>
<path d="M1097 407 L1101 406.5 C1104 408 1105 410 1110.5 410.5 V411.5 C1105 412 1104 414 1101 415.5 L1097 415 Z" fill="#43342f"/>
<path d="M1097 420 L1101 419.5 C1104 421 1105 423 1110.5 423.5 V424.5 C1105 425 1104 427 1101 428.5 L1097 428 Z" fill="#43342f"/>
<path d="M1097 432 L1101 431.5 C1104 433 1105 435 1110.5 435.5 V436.5 C1105 437 1104 439 1101 440.5 L1097 440 Z" fill="#43342f"/>
<path d="M1101.5 392 V442 M1100 393 Q1106 412 1110.5 417 M1104 418 Q1108 436 1110.5 441" fill="none" stroke="#3a2a28" stroke-width=".8"/>
<path d="M1097 492 H1098.5 L1109.0 498.2 V499.2 L1101.5 504.5 L1109.0 509.8 V510.8 L1100 517 H1097 Z" fill="#666666"/>
<rect x="1096" y="517" width="13.200000000000045" height="125" fill="#63b797"/>
<rect x="1108.9" y="517" width="1" height="125" fill="#383c3a"/>
<rect x="1096" y="567" width="13.200000000000045" height="75" fill="#58a286"/>
<rect x="1102" y="542" width="3" height="25" fill="#5cac8e"/>
<path d="M1096.8 542 H1100.1 L1105.5 547.35 V549.15 L1099.6 554.5 L1105.5 559.85 V561.65 L1100.1 567 H1096.8 Z" fill="#284a3e"/>
<path d="M1105.5 542 V567" stroke="#2a5a48" stroke-width="1"/>
<path d="M1096.8 567.5 H1098.5 L1098.5 567.75 Q1100.74 571.71 1106.5 572.65 V573.85 Q1100.74 574.79 1098.5 578.75 L1098.5 580.25 Q1100.74 584.21 1106.5 585.15 V586.35 Q1100.74 587.29 1098.5 591.25 L1098.5 591.5 H1096.8 Z" fill="#284a3e"/>
<path d="M1106.5 567 V592" stroke="#2a5a48" stroke-width="1"/>
<path d="M1096.8 592.5 H1098.5 L1098.5 592.45 Q1101.356 596.626 1108.7 597.65 V598.85 Q1101.356 599.874 1098.5 604.05 L1098.5 604.95 Q1101.356 609.126 1108.7 610.15 V611.35 Q1101.356 612.374 1098.5 616.55 L1098.5 616.5 H1096.8 Z" fill="#284a3e"/>
<path d="M1098 618 C1103 617.5 1105 621 1108.7 622.3 V623.7 C1105 625 1103 628.5 1098 628 Z" fill="#284a3e"/>
<path d="M1098 630.5 C1103 630.0 1105 633.5 1108.7 634.8 V636.2 C1105 637.5 1103 641.0 1098 640.5 Z" fill="#284a3e"/>
<path d="M1097.5 618 V622 M1097.5 626 V630 M1097.5 634 V638" stroke="#c02020" stroke-width="1"/>
<path d="M1098.5 543 Q1100 600 1108.7 617 M1099 618 Q1101 636 1108.7 641" fill="none" stroke="#1e3a30" stroke-width=".8"/>
<path d="M1108.7 542 V642" stroke="#2c5c4a" stroke-width="1" opacity=".8"/>
<path d="M1125 205 C1124 198 1126 192.5 1129 192.5 C1133 193 1135 197 1150 198.5 C1137 200 1133 202 1130 204.5 C1134 205 1136 208.5 1150 210.5 C1137 212 1133 215 1129 217 H1126 C1125 214 1124 210 1125 205 Z" fill="#666666"/>
<path d="M1126 217 H1129 C1131 221 1131.5 226 1129 229.5 C1131.5 233 1131.5 238 1130 242 H1125.5 C1124.5 238 1125 233 1127 229.5 C1125 226 1124.5 221 1126 217 Z" fill="#666666"/>
<rect x="1125" y="242" width="6.5" height="75" fill="#8aadb4"/>
<rect x="1131.2" y="242" width="1" height="75" fill="#3a3c3c"/>
<path d="M1127 268 C1131.5 266 1131.5 276 1129 279.5 C1132 283 1131.5 289 1129 291.5 H1126.5 C1125.5 285 1125.5 274 1127 268 Z" fill="#2c3a3e"/>
<path d="M1126.5 293 V316 M1130.0 293 V316 M1126.5 316 L1129.5 294" stroke="#3a5a62" stroke-width=".9" fill="none"/>
<path d="M1129 344.5 C1133 343 1136 345.5 1138 347 L1141 348 L1150 348.4 V349.6 L1141 350 L1138 351 C1136 352.5 1133 355 1129 353.5 Z" fill="#666666"/>
<path d="M1129 356.5 C1133 355 1136 357.5 1138 359 L1141 360 L1150 360.4 V361.6 L1141 362 L1138 363 C1136 364.5 1133 367 1129 365.5 Z" fill="#666666"/>
<rect x="1128" y="367" width="23" height="75" fill="#bd9b90"/>
<rect x="1128" y="393" width="23" height="49" fill="#ad8c7d"/>
<rect x="1128" y="416" width="23" height="1.5" fill="#b89588"/>
<rect x="1150.7" y="367" width="1" height="75" fill="#383838"/>
<path d="M1129 395 L1133 394.5 C1136 396 1137 398 1150 398.5 V399.5 C1137 400 1136 402 1133 403.5 L1129 403 Z" fill="#43342f"/>
<path d="M1129 407 L1133 406.5 C1136 408 1137 410 1150 410.5 V411.5 C1137 412 1136 414 1133 415.5 L1129 415 Z" fill="#43342f"/>
<path d="M1129 420 L1133 419.5 C1136 421 1137 423 1150 423.5 V424.5 C1137 425 1136 427 1133 428.5 L1129 428 Z" fill="#43342f"/>
<path d="M1129 432 L1133 431.5 C1136 433 1137 435 1150 435.5 V436.5 C1137 437 1136 439 1133 440.5 L1129 440 Z" fill="#43342f"/>
<path d="M1133.5 392 V442 M1132 393 Q1138 412 1150 417 M1136 418 Q1140 436 1150 441" fill="none" stroke="#3a2a28" stroke-width=".8"/>
<text x="1133" y="386" font-family="Liberation Sans, sans-serif" font-size="9.3" fill="#30141e">@..</text>
<path d="M1129 492 H1130.5 L1141.0 498.2 V499.2 L1133.5 504.5 L1141.0 509.8 V510.8 L1132 517 H1129 Z" fill="#666666"/>
<rect x="1128" y="517" width="13.200000000000045" height="125" fill="#63b797"/>
<rect x="1140.9" y="517" width="1" height="125" fill="#383c3a"/>
<rect x="1128" y="567" width="13.200000000000045" height="75" fill="#58a286"/>
<rect x="1134" y="542" width="3" height="25" fill="#5cac8e"/>
<path d="M1128.8 542 H1132.1 L1137.5 547.35 V549.15 L1131.6 554.5 L1137.5 559.85 V561.65 L1132.1 567 H1128.8 Z" fill="#284a3e"/>
<path d="M1137.5 542 V567" stroke="#2a5a48" stroke-width="1"/>
<path d="M1128.8 567.5 H1130.5 L1130.5 567.75 Q1132.74 571.71 1138.5 572.65 V573.85 Q1132.74 574.79 1130.5 578.75 L1130.5 580.25 Q1132.74 584.21 1138.5 585.15 V586.35 Q1132.74 587.29 1130.5 591.25 L1130.5 591.5 H1128.8 Z" fill="#284a3e"/>
<path d="M1138.5 567 V592" stroke="#2a5a48" stroke-width="1"/>
<path d="M1128.8 592.5 H1130.5 L1130.5 592.45 Q1133.356 596.626 1140.7 597.65 V598.85 Q1133.356 599.874 1130.5 604.05 L1130.5 604.95 Q1133.356 609.126 1140.7 610.15 V611.35 Q1133.356 612.374 1130.5 616.55 L1130.5 616.5 H1128.8 Z" fill="#284a3e"/>
<path d="M1130 618 C1135 617.5 1137 621 1140.7 622.3 V623.7 C1137 625 1135 628.5 1130 628 Z" fill="#284a3e"/>
<path d="M1130 630.5 C1135 630.0 1137 633.5 1140.7 634.8 V636.2 C1137 637.5 1135 641.0 1130 640.5 Z" fill="#284a3e"/>
<path d="M1129.5 618 V622 M1129.5 626 V630 M1129.5 634 V638" stroke="#c02020" stroke-width="1"/>
<path d="M1130.5 543 Q1132 600 1140.7 617 M1131 618 Q1133 636 1140.7 641" fill="none" stroke="#1e3a30" stroke-width=".8"/>
<path d="M1140.7 542 V642" stroke="#2c5c4a" stroke-width="1" opacity=".8"/>
<path d="M1177.5 205 C1176.5 198 1178.5 192.5 1181.5 192.5 C1185.5 193 1187.5 197 1203 198.5 C1189.5 200 1185.5 202 1182.5 204.5 C1186.5 205 1188.5 208.5 1203 210.5 C1189.5 212 1185.5 215 1181.5 217 H1178.5 C1177.5 214 1176.5 210 1177.5 205 Z" fill="#666666"/>
<path d="M1178.5 217 H1181.5 C1183.5 221 1184.0 226 1181.5 229.5 C1184.0 233 1184.0 238 1182.5 242 H1178.0 C1177.0 238 1177.5 233 1179.5 229.5 C1177.5 226 1177.0 221 1178.5 217 Z" fill="#666666"/>
<rect x="1177.5" y="242" width="6.5" height="75" fill="#8aadb4"/>
<rect x="1183.7" y="242" width="1" height="75" fill="#3a3c3c"/>
<path d="M1179.5 268 C1184.0 266 1184.0 276 1181.5 279.5 C1184.5 283 1184.0 289 1181.5 291.5 H1179.0 C1178.0 285 1178.0 274 1179.5 268 Z" fill="#2c3a3e"/>
<path d="M1179.0 293 V316 M1182.5 293 V316 M1179.0 316 L1182 294" stroke="#3a5a62" stroke-width=".9" fill="none"/>
<path d="M1182 344.5 C1186 343 1189 345.5 1191 347 L1194 348 L1203 348.4 V349.6 L1194 350 L1191 351 C1189 352.5 1186 355 1182 353.5 Z" fill="#666666"/>
<path d="M1182 356.5 C1186 355 1189 357.5 1191 359 L1194 360 L1203 360.4 V361.6 L1194 362 L1191 363 C1189 364.5 1186 367 1182 365.5 Z" fill="#666666"/>
<rect x="1181" y="367" width="23" height="75" fill="#bd9b90"/>
<rect x="1181" y="393" width="23" height="49" fill="#ad8c7d"/>
<rect x="1181" y="416" width="23" height="1.5" fill="#b89588"/>
<rect x="1203.7" y="367" width="1" height="75" fill="#383838"/>
<path d="M1182 395 L1186 394.5 C1189 396 1190 398 1203 398.5 V399.5 C1190 400 1189 402 1186 403.5 L1182 403 Z" fill="#43342f"/>
<path d="M1182 407 L1186 406.5 C1189 408 1190 410 1203 410.5 V411.5 C1190 412 1189 414 1186 415.5 L1182 415 Z" fill="#43342f"/>
<path d="M1182 420 L1186 419.5 C1189 421 1190 423 1203 423.5 V424.5 C1190 425 1189 427 1186 428.5 L1182 428 Z" fill="#43342f"/>
<path d="M1182 432 L1186 431.5 C1189 433 1190 435 1203 435.5 V436.5 C1190 437 1189 439 1186 440.5 L1182 440 Z" fill="#43342f"/>
<path d="M1186.5 392 V442 M1185 393 Q1191 412 1203 417 M1189 418 Q1193 436 1203 441" fill="none" stroke="#3a2a28" stroke-width=".8"/>
<text x="1186" y="386" font-family="Liberation Sans, sans-serif" font-size="9.3" fill="#30141e">@L</text>
<path d="M1181 492 H1182.5 L1193.0 498.2 V499.2 L1185.5 504.5 L1193.0 509.8 V510.8 L1184 517 H1181 Z" fill="#666666"/>
<rect x="1180" y="517" width="13.200000000000045" height="125" fill="#63b797"/>
<rect x="1192.9" y="517" width="1" height="125" fill="#383c3a"/>
<rect x="1180" y="567" width="13.200000000000045" height="75" fill="#58a286"/>
<rect x="1186" y="542" width="3" height="25" fill="#5cac8e"/>
<path d="M1180.8 542 H1184.1 L1189.5 547.35 V549.15 L1183.6 554.5 L1189.5 559.85 V561.65 L1184.1 567 H1180.8 Z" fill="#284a3e"/>
<path d="M1189.5 542 V567" stroke="#2a5a48" stroke-width="1"/>
<path d="M1180.8 567.5 H1182.5 L1182.5 567.75 Q1184.74 571.71 1190.5 572.65 V573.85 Q1184.74 574.79 1182.5 578.75 L1182.5 580.25 Q1184.74 584.21 1190.5 585.15 V586.35 Q1184.74 587.29 1182.5 591.25 L1182.5 591.5 H1180.8 Z" fill="#284a3e"/>
<path d="M1190.5 567 V592" stroke="#2a5a48" stroke-width="1"/>
<path d="M1180.8 592.5 H1182.5 L1182.5 592.45 Q1185.356 596.626 1192.7 597.65 V598.85 Q1185.356 599.874 1182.5 604.05 L1182.5 604.95 Q1185.356 609.126 1192.7 610.15 V611.35 Q1185.356 612.374 1182.5 616.55 L1182.5 616.5 H1180.8 Z" fill="#284a3e"/>
<path d="M1182 618 C1187 617.5 1189 621 1192.7 622.3 V623.7 C1189 625 1187 628.5 1182 628 Z" fill="#284a3e"/>
<path d="M1182 630.5 C1187 630.0 1189 633.5 1192.7 634.8 V636.2 C1189 637.5 1187 641.0 1182 640.5 Z" fill="#284a3e"/>
<path d="M1181.5 618 V622 M1181.5 626 V630 M1181.5 634 V638" stroke="#c02020" stroke-width="1"/>
<path d="M1182.5 543 Q1184 600 1192.7 617 M1183 618 Q1185 636 1192.7 641" fill="none" stroke="#1e3a30" stroke-width=".8"/>
<path d="M1192.7 542 V642" stroke="#2c5c4a" stroke-width="1" opacity=".8"/>
<path d="M1217.5 205 C1216.5 198 1218.5 192.5 1221.5 192.5 C1225.5 193 1227.5 197 1241.5 198.5 C1229.5 200 1225.5 202 1222.5 204.5 C1226.5 205 1228.5 208.5 1241.5 210.5 C1229.5 212 1225.5 215 1221.5 217 H1218.5 C1217.5 214 1216.5 210 1217.5 205 Z" fill="#666666"/>
<path d="M1218.5 217 H1221.5 C1223.5 221 1224.0 226 1221.5 229.5 C1224.0 233 1224.0 238 1222.5 242 H1218.0 C1217.0 238 1217.5 233 1219.5 229.5 C1217.5 226 1217.0 221 1218.5 217 Z" fill="#666666"/>
<rect x="1217.5" y="242" width="6.5" height="75" fill="#8aadb4"/>
<rect x="1223.7" y="242" width="1" height="75" fill="#3a3c3c"/>
<path d="M1219.5 268 C1224.0 266 1224.0 276 1221.5 279.5 C1224.5 283 1224.0 289 1221.5 291.5 H1219.0 C1218.0 285 1218.0 274 1219.5 268 Z" fill="#2c3a3e"/>
<path d="M1219.0 293 V316 M1222.5 293 V316 M1219.0 316 L1222 294" stroke="#3a5a62" stroke-width=".9" fill="none"/>
<path d="M1221 344.5 C1225 343 1228 345.5 1230 347 L1233 348 L1241.5 348.4 V349.6 L1233 350 L1230 351 C1228 352.5 1225 355 1221 353.5 Z" fill="#666666"/>
<path d="M1221 356.5 C1225 355 1228 357.5 1230 359 L1233 360 L1241.5 360.4 V361.6 L1233 362 L1230 363 C1228 364.5 1225 367 1221 365.5 Z" fill="#666666"/>
<rect x="1220" y="367" width="22.5" height="75" fill="#bd9b90"/>
<rect x="1220" y="393" width="22.5" height="49" fill="#ad8c7d"/>
<rect x="1220" y="416" width="22.5" height="1.5" fill="#b89588"/>
<rect x="1242.2" y="367" width="1" height="75" fill="#383838"/>
<path d="M1221 395 L1225 394.5 C1228 396 1229 398 1241.5 398.5 V399.5 C1229 400 1228 402 1225 403.5 L1221 403 Z" fill="#43342f"/>
<path d="M1221 407 L1225 406.5 C1228 408 1229 410 1241.5 410.5 V411.5 C1229 412 1228 414 1225 415.5 L1221 415 Z" fill="#43342f"/>
<path d="M1221 420 L1225 419.5 C1228 421 1229 423 1241.5 423.5 V424.5 C1229 425 1228 427 1225 428.5 L1221 428 Z" fill="#43342f"/>
<path d="M1221 432 L1225 431.5 C1228 433 1229 435 1241.5 435.5 V436.5 C1229 437 1228 439 1225 440.5 L1221 440 Z" fill="#43342f"/>
<path d="M1225.5 392 V442 M1224 393 Q1230 412 1241.5 417 M1228 418 Q1232 436 1241.5 441" fill="none" stroke="#3a2a28" stroke-width=".8"/>
<text x="1225" y="386" font-family="Liberation Sans, sans-serif" font-size="9.3" fill="#30141e">@L</text>
<path d="M1221 492 H1222.5 L1233.0 498.2 V499.2 L1225.5 504.5 L1233.0 509.8 V510.8 L1224 517 H1221 Z" fill="#666666"/>
<rect x="1220" y="517" width="13.200000000000045" height="125" fill="#63b797"/>
<rect x="1232.9" y="517" width="1" height="125" fill="#383c3a"/>
<rect x="1220" y="567" width="13.200000000000045" height="75" fill="#58a286"/>
<rect x="1226" y="542" width="3" height="25" fill="#5cac8e"/>
<path d="M1220.8 542 H1224.1 L1229.5 547.35 V549.15 L1223.6 554.5 L1229.5 559.85 V561.65 L1224.1 567 H1220.8 Z" fill="#284a3e"/>
<path d="M1229.5 542 V567" stroke="#2a5a48" stroke-width="1"/>
<path d="M1220.8 567.5 H1222.5 L1222.5 567.75 Q1224.74 571.71 1230.5 572.65 V573.85 Q1224.74 574.79 1222.5 578.75 L1222.5 580.25 Q1224.74 584.21 1230.5 585.15 V586.35 Q1224.74 587.29 1222.5 591.25 L1222.5 591.5 H1220.8 Z" fill="#284a3e"/>
<path d="M1230.5 567 V592" stroke="#2a5a48" stroke-width="1"/>
<path d="M1220.8 592.5 H1222.5 L1222.5 592.45 Q1225.356 596.626 1232.7 597.65 V598.85 Q1225.356 599.874 1222.5 604.05 L1222.5 604.95 Q1225.356 609.126 1232.7 610.15 V611.35 Q1225.356 612.374 1222.5 616.55 L1222.5 616.5 H1220.8 Z" fill="#284a3e"/>
<path d="M1222 618 C1227 617.5 1229 621 1232.7 622.3 V623.7 C1229 625 1227 628.5 1222 628 Z" fill="#284a3e"/>
<path d="M1222 630.5 C1227 630.0 1229 633.5 1232.7 634.8 V636.2 C1229 637.5 1227 641.0 1222 640.5 Z" fill="#284a3e"/>
<path d="M1221.5 618 V622 M1221.5 626 V630 M1221.5 634 V638" stroke="#c02020" stroke-width="1"/>
<path d="M1222.5 543 Q1224 600 1232.7 617 M1223 618 Q1225 636 1232.7 641" fill="none" stroke="#1e3a30" stroke-width=".8"/>
<path d="M1232.7 542 V642" stroke="#2c5c4a" stroke-width="1" opacity=".8"/>
<path d="M1257.5 205 C1256.5 198 1258.5 192.5 1261.5 192.5 C1265.5 193 1267.5 197 1275 198.5 C1269.5 200 1265.5 202 1262.5 204.5 C1266.5 205 1268.5 208.5 1275 210.5 C1269.5 212 1265.5 215 1261.5 217 H1258.5 C1257.5 214 1256.5 210 1257.5 205 Z" fill="#666666"/>
<path d="M1258.5 217 H1261.5 C1263.5 221 1264.0 226 1261.5 229.5 C1264.0 233 1264.0 238 1262.5 242 H1258.0 C1257.0 238 1257.5 233 1259.5 229.5 C1257.5 226 1257.0 221 1258.5 217 Z" fill="#666666"/>
<rect x="1257.5" y="242" width="6.5" height="75" fill="#8aadb4"/>
<rect x="1263.7" y="242" width="1" height="75" fill="#3a3c3c"/>
<path d="M1259.5 268 C1264.0 266 1264.0 276 1261.5 279.5 C1264.5 283 1264.0 289 1261.5 291.5 H1259.0 C1258.0 285 1258.0 274 1259.5 268 Z" fill="#2c3a3e"/>
<path d="M1259.0 293 V316 M1262.5 293 V316 M1259.0 316 L1262 294" stroke="#3a5a62" stroke-width=".9" fill="none"/>
<path d="M1262 344.5 C1266 343 1269 345.5 1271 347 L1274 348 L1275 348.4 V349.6 L1274 350 L1271 351 C1269 352.5 1266 355 1262 353.5 Z" fill="#666666"/>
<path d="M1262 356.5 C1266 355 1269 357.5 1271 359 L1274 360 L1275 360.4 V361.6 L1274 362 L1271 363 C1269 364.5 1266 367 1262 365.5 Z" fill="#666666"/>
<rect x="1261" y="367" width="15" height="75" fill="#bd9b90"/>
<rect x="1261" y="393" width="15" height="49" fill="#ad8c7d"/>
<rect x="1261" y="416" width="15" height="1.5" fill="#b89588"/>
<rect x="1275.7" y="367" width="1" height="75" fill="#383838"/>
<path d="M1262 395 L1266 394.5 C1269 396 1270 398 1275 398.5 V399.5 C1270 400 1269 402 1266 403.5 L1262 403 Z" fill="#43342f"/>
<path d="M1262 407 L1266 406.5 C1269 408 1270 410 1275 410.5 V411.5 C1270 412 1269 414 1266 415.5 L1262 415 Z" fill="#43342f"/>
<path d="M1262 420 L1266 419.5 C1269 421 1270 423 1275 423.5 V424.5 C1270 425 1269 427 1266 428.5 L1262 428 Z" fill="#43342f"/>
<path d="M1262 432 L1266 431.5 C1269 433 1270 435 1275 435.5 V436.5 C1270 437 1269 439 1266 440.5 L1262 440 Z" fill="#43342f"/>
<path d="M1266.5 392 V442 M1265 393 Q1271 412 1275 417 M1269 418 Q1273 436 1275 441" fill="none" stroke="#3a2a28" stroke-width=".8"/>
<path d="M1262 492 H1263.5 L1274.0 498.2 V499.2 L1266.5 504.5 L1274.0 509.8 V510.8 L1265 517 H1262 Z" fill="#666666"/>
<rect x="1261" y="517" width="13.200000000000045" height="125" fill="#63b797"/>
<rect x="1273.9" y="517" width="1" height="125" fill="#383c3a"/>
<rect x="1261" y="567" width="13.200000000000045" height="75" fill="#58a286"/>
<rect x="1267" y="542" width="3" height="25" fill="#5cac8e"/>
<path d="M1261.8 542 H1265.1 L1270.5 547.35 V549.15 L1264.6 554.5 L1270.5 559.85 V561.65 L1265.1 567 H1261.8 Z" fill="#284a3e"/>
<path d="M1270.5 542 V567" stroke="#2a5a48" stroke-width="1"/>
<path d="M1261.8 567.5 H1263.5 L1263.5 567.75 Q1265.74 571.71 1271.5 572.65 V573.85 Q1265.74 574.79 1263.5 578.75 L1263.5 580.25 Q1265.74 584.21 1271.5 585.15 V586.35 Q1265.74 587.29 1263.5 591.25 L1263.5 591.5 H1261.8 Z" fill="#284a3e"/>
<path d="M1271.5 567 V592" stroke="#2a5a48" stroke-width="1"/>
<path d="M1261.8 592.5 H1263.5 L1263.5 592.45 Q1266.356 596.626 1273.7 597.65 V598.85 Q1266.356 599.874 1263.5 604.05 L1263.5 604.95 Q1266.356 609.126 1273.7 610.15 V611.35 Q1266.356 612.374 1263.5 616.55 L1263.5 616.5 H1261.8 Z" fill="#284a3e"/>
<path d="M1263 618 C1268 617.5 1270 621 1273.7 622.3 V623.7 C1270 625 1268 628.5 1263 628 Z" fill="#284a3e"/>
<path d="M1263 630.5 C1268 630.0 1270 633.5 1273.7 634.8 V636.2 C1270 637.5 1268 641.0 1263 640.5 Z" fill="#284a3e"/>
<path d="M1262.5 618 V622 M1262.5 626 V630 M1262.5 634 V638" stroke="#c02020" stroke-width="1"/>
<path d="M1263.5 543 Q1265 600 1273.7 617 M1264 618 Q1266 636 1273.7 641" fill="none" stroke="#1e3a30" stroke-width=".8"/>
<path d="M1273.7 542 V642" stroke="#2c5c4a" stroke-width="1" opacity=".8"/>
<path d="M1284 205 C1283 198 1285 192.5 1288 192.5 C1292 193 1294 197 1301 198.5 C1296 200 1292 202 1289 204.5 C1293 205 1295 208.5 1301 210.5 C1296 212 1292 215 1288 217 H1285 C1284 214 1283 210 1284 205 Z" fill="#666666"/>
<path d="M1285 217 H1288 C1290 221 1290.5 226 1288 229.5 C1290.5 233 1290.5 238 1289 242 H1284.5 C1283.5 238 1284 233 1286 229.5 C1284 226 1283.5 221 1285 217 Z" fill="#666666"/>
<rect x="1284" y="242" width="6.5" height="75" fill="#8aadb4"/>
<rect x="1290.2" y="242" width="1" height="75" fill="#3a3c3c"/>
<path d="M1286 268 C1290.5 266 1290.5 276 1288 279.5 C1291 283 1290.5 289 1288 291.5 H1285.5 C1284.5 285 1284.5 274 1286 268 Z" fill="#2c3a3e"/>
<path d="M1285.5 293 V316 M1289.0 293 V316 M1285.5 316 L1288.5 294" stroke="#3a5a62" stroke-width=".9" fill="none"/>
<path d="M1288 344.5 C1292 343 1295 345.5 1297 347 L1300 348 L1301 348.4 V349.6 L1300 350 L1297 351 C1295 352.5 1292 355 1288 353.5 Z" fill="#666666"/>
<path d="M1288 356.5 C1292 355 1295 357.5 1297 359 L1300 360 L1301 360.4 V361.6 L1300 362 L1297 363 C1295 364.5 1292 367 1288 365.5 Z" fill="#666666"/>
<rect x="1287" y="367" width="15" height="75" fill="#bd9b90"/>
<rect x="1287" y="393" width="15" height="49" fill="#ad8c7d"/>
<rect x="1287" y="416" width="15" height="1.5" fill="#b89588"/>
<rect x="1301.7" y="367" width="1" height="75" fill="#383838"/>
<path d="M1288 395 L1292 394.5 C1295 396 1296 398 1301 398.5 V399.5 C1296 400 1295 402 1292 403.5 L1288 403 Z" fill="#43342f"/>
<path d="M1288 407 L1292 406.5 C1295 408 1296 410 1301 410.5 V411.5 C1296 412 1295 414 1292 415.5 L1288 415 Z" fill="#43342f"/>
<path d="M1288 420 L1292 419.5 C1295 421 1296 423 1301 423.5 V424.5 C1296 425 1295 427 1292 428.5 L1288 428 Z" fill="#43342f"/>
<path d="M1288 432 L1292 431.5 C1295 433 1296 435 1301 435.5 V436.5 C1296 437 1295 439 1292 440.5 L1288 440 Z" fill="#43342f"/>
<path d="M1292.5 392 V442 M1291 393 Q1297 412 1301 417 M1295 418 Q1299 436 1301 441" fill="none" stroke="#3a2a28" stroke-width=".8"/>
<path d="M1288 492 H1289.5 L1300.0 498.2 V499.2 L1292.5 504.5 L1300.0 509.8 V510.8 L1291 517 H1288 Z" fill="#666666"/>
<rect x="1287" y="517" width="13.200000000000045" height="125" fill="#63b797"/>
<rect x="1299.9" y="517" width="1" height="125" fill="#383c3a"/>
<rect x="1287" y="567" width="13.200000000000045" height="75" fill="#58a286"/>
<rect x="1293" y="542" width="3" height="25" fill="#5cac8e"/>
<path d="M1287.8 542 H1291.1 L1296.5 547.35 V549.15 L1290.6 554.5 L1296.5 559.85 V561.65 L1291.1 567 H1287.8 Z" fill="#284a3e"/>
<path d="M1296.5 542 V567" stroke="#2a5a48" stroke-width="1"/>
<path d="M1287.8 567.5 H1289.5 L1289.5 567.75 Q1291.74 571.71 1297.5 572.65 V573.85 Q1291.74 574.79 1289.5 578.75 L1289.5 580.25 Q1291.74 584.21 1297.5 585.15 V586.35 Q1291.74 587.29 1289.5 591.25 L1289.5 591.5 H1287.8 Z" fill="#284a3e"/>
<path d="M1297.5 567 V592" stroke="#2a5a48" stroke-width="1"/>
<path d="M1287.8 592.5 H1289.5 L1289.5 592.45 Q1292.356 596.626 1299.7 597.65 V598.85 Q1292.356 599.874 1289.5 604.05 L1289.5 604.95 Q1292.356 609.126 1299.7 610.15 V611.35 Q1292.356 612.374 1289.5 616.55 L1289.5 616.5 H1287.8 Z" fill="#284a3e"/>
<path d="M1289 618 C1294 617.5 1296 621 1299.7 622.3 V623.7 C1296 625 1294 628.5 1289 628 Z" fill="#284a3e"/>
<path d="M1289 630.5 C1294 630.0 1296 633.5 1299.7 634.8 V636.2 C1296 637.5 1294 641.0 1289 640.5 Z" fill="#284a3e"/>
<path d="M1288.5 618 V622 M1288.5 626 V630 M1288.5 634 V638" stroke="#c02020" stroke-width="1"/>
<path d="M1289.5 543 Q1291 600 1299.7 617 M1290 618 Q1292 636 1299.7 641" fill="none" stroke="#1e3a30" stroke-width=".8"/>
<path d="M1299.7 542 V642" stroke="#2c5c4a" stroke-width="1" opacity=".8"/>
</svg>
<svg class="a" style="left:687px;top:67px" width="781" height="717" viewBox="687 67 781 717">
<circle cx="1458.5" cy="75.5" r="5.6" fill="#141414"/><path d="M1455.6 77.5 L1458.5 72.8 L1461.4 77.5 Z" fill="#909090"/>
<rect x="1453" y="87" width="11" height="619" rx="5.5" fill="#5c5c5c"/>
<circle cx="1458.5" cy="717.5" r="5.6" fill="#141414"/><path d="M1455.8 715.8 L1458.5 720.4 L1461.2 715.8 Z" fill="#a8a8a8"/>
<path d="M1454 734.5 H1463 M1458.5 730 V739" stroke="#a8a8a8" stroke-width="2.6"/><path d="M1454 745 H1463" stroke="#262626" stroke-width="1.6"/><path d="M1454 755.3 H1463" stroke="#a8a8a8" stroke-width="2.6"/>
<circle cx="695.5" cy="772.5" r="5.6" fill="#141414"/><path d="M697.4 769.6 L692.8 772.5 L697.4 775.4 Z" fill="#b0b0b0"/>
<rect x="707" y="767" width="1412" height="11" rx="5.5" fill="#5c5c5c" style="width:412px"/>
<circle cx="712.5" cy="772.5" r="2.6" fill="#141414"/><circle cx="1113.5" cy="772.5" r="2.6" fill="#141414"/><path d="M913 769 V776" stroke="#1c1c1c" stroke-width="1.6"/>
<circle cx="1403.5" cy="772.5" r="5.6" fill="#141414"/><path d="M1401.8 769.6 L1406.4 772.5 L1401.8 775.4 Z" fill="#a0a0a0"/>
<path d="M1416 772.5 H1425 M1420.5 768 V777" stroke="#a8a8a8" stroke-width="2.6"/><path d="M1431 768 V777" stroke="#262626" stroke-width="1.6"/><path d="M1437 772.5 H1446" stroke="#a8a8a8" stroke-width="2.6"/>
</svg>
<div class="a" style="left:221px;top:764px;width:458px;height:1px;background:#484848"></div>
<div class="t" style="left:221.5px;top:767.5px;font-size:10.3px;color:#707070">Explosion [FX] Compciter, Transpire</div>
<div class="a" style="left:0;top:782px;width:1468px;height:2px;background:#3e3e3e"></div>
<div class="a" style="left:263px;top:782px;width:1px;height:2px;background:#1c1c1c"></div><div class="a" style="left:508px;top:782px;width:1px;height:2px;background:#2a9a80"></div><div class="a" style="left:998px;top:782px;width:1px;height:2px;background:#1c1c1c"></div>
<svg class="a" style="left:516px;top:392px" width="16" height="22" viewBox="0 0 16 22"><path d="M1.5 1.5 V17.5 L5.3 14 L8.2 20.3 L10.6 19.2 L7.8 13 H13 Z" fill="#fff" stroke="#000" stroke-width="1"/></svg>
</body></html>
